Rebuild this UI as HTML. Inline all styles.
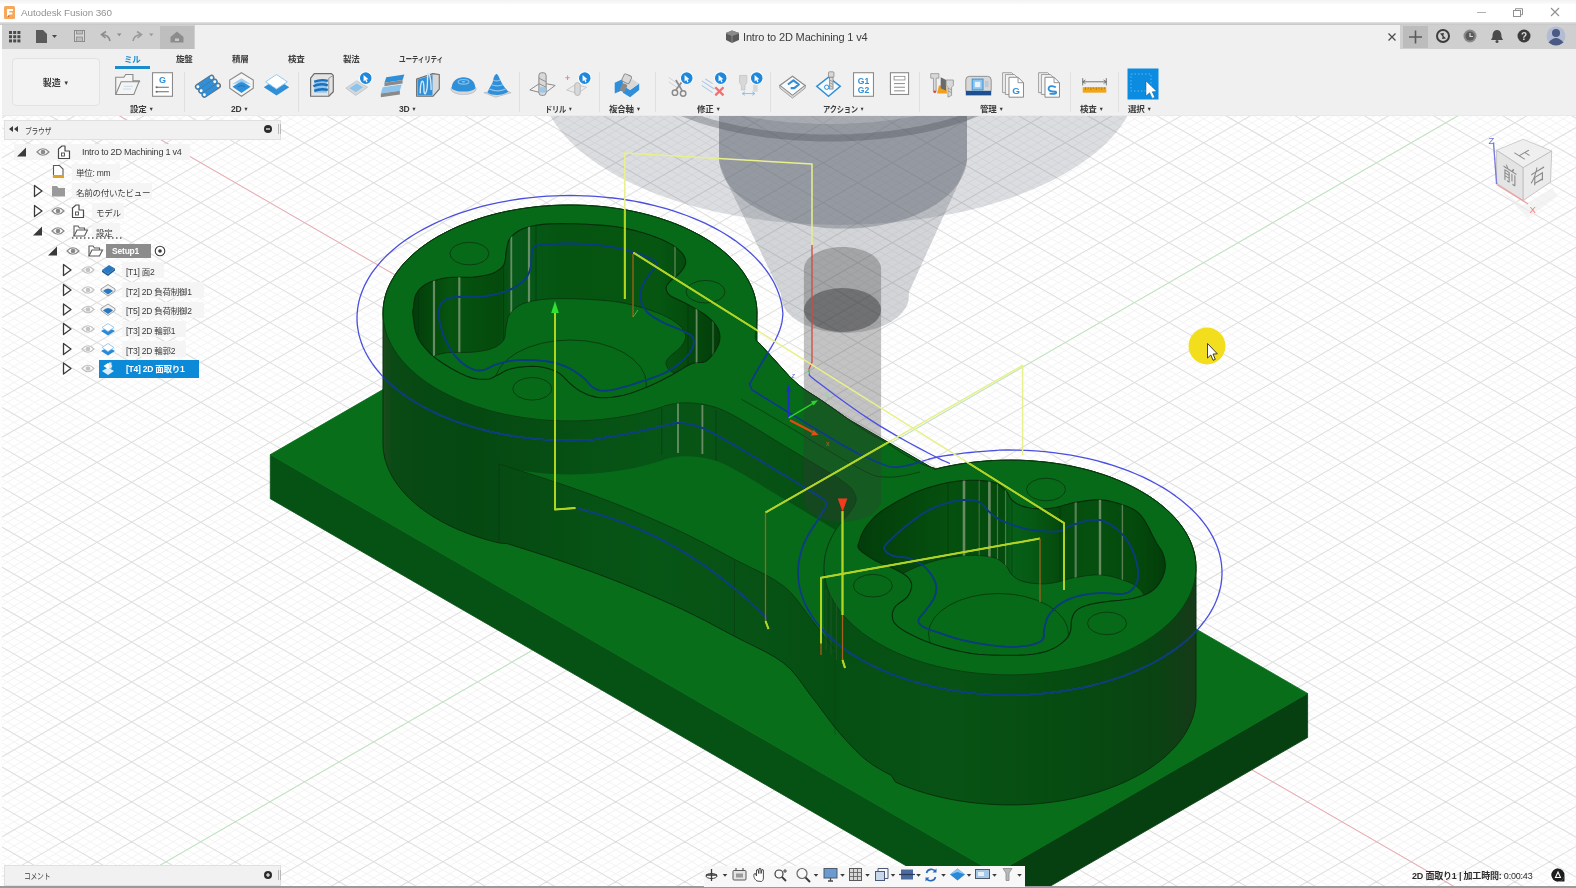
<!DOCTYPE html>
<html lang="ja"><head><meta charset="utf-8"><title>Autodesk Fusion 360</title>
<style>html,body{margin:0;padding:0;background:#fff;overflow:hidden}#app{filter:blur(0.5px);position:relative;width:1576px;height:888px;overflow:hidden;background:#fff}#app div{line-height:1.25}</style></head><body><div id="app">
<svg width="1576" height="888" viewBox="0 0 1576 888" style="position:absolute;left:0;top:0"><defs><linearGradient id="gw1" gradientUnits="userSpaceOnUse" x1="383" y1="0" x2="1196" y2="0">
<stop offset="0" stop-color="#1c4a1e"/><stop offset="0.012" stop-color="#0a4a14"/><stop offset="0.1" stop-color="#054811"/><stop offset="0.2" stop-color="#064e13"/>
<stop offset="0.33" stop-color="#075616"/><stop offset="0.42" stop-color="#075315"/><stop offset="0.55" stop-color="#064f13"/><stop offset="0.7" stop-color="#075214"/><stop offset="0.85" stop-color="#064b11"/>
<stop offset="0.95" stop-color="#0a4312"/><stop offset="1" stop-color="#163a18"/></linearGradient><linearGradient id="gp1" gradientUnits="userSpaceOnUse" x1="413" y1="0" x2="720" y2="0">
<stop offset="0" stop-color="#033d0a"/><stop offset="0.12" stop-color="#06540f"/><stop offset="0.28" stop-color="#044a0c"/><stop offset="0.33" stop-color="#07591a"/>
<stop offset="0.5" stop-color="#055410"/><stop offset="0.8" stop-color="#065612"/><stop offset="0.9" stop-color="#044a0c"/><stop offset="1" stop-color="#033d0a"/></linearGradient><linearGradient id="gp2" gradientUnits="userSpaceOnUse" x1="859" y1="0" x2="1165" y2="0">
<stop offset="0" stop-color="#033d0a"/><stop offset="0.3" stop-color="#05500f"/><stop offset="0.47" stop-color="#044a0c"/><stop offset="0.5" stop-color="#076018"/><stop offset="0.56" stop-color="#065a14"/><stop offset="0.66" stop-color="#044a0c"/>
<stop offset="0.75" stop-color="#05500f"/><stop offset="0.9" stop-color="#044a0c"/><stop offset="1" stop-color="#033d0a"/></linearGradient><clipPath id="cp0"><path d="M413.6,306.9 413.9,304.0 414.3,300.7 414.9,297.3 416.1,294.2 417.9,291.4 420.1,288.7 422.9,286.3 426.3,284.1 430.5,282.1 435.5,280.3 440.9,278.8 446.6,277.7 452.7,277.3 459.3,277.3 465.9,277.4 472.0,277.2 477.6,276.6 483.0,275.8 488.0,274.8 492.3,273.4 496.0,271.8 499.1,269.8 501.7,267.6 503.7,265.0 504.9,261.9 505.5,258.3 505.7,254.6 506.2,251.1 506.9,247.7 507.5,244.5 508.4,241.3 510.1,238.4 512.4,235.6 515.4,233.0 518.8,230.7 522.7,228.7 527.2,227.2 532.1,226.0 537.4,225.1 543.0,224.4 549.0,223.9 555.4,223.7 562.0,223.6 568.4,223.7 574.8,223.7 581.1,224.0 587.5,224.3 593.8,224.7 600.2,225.1 606.5,225.6 612.8,226.3 619.2,227.2 625.6,228.4 632.0,229.9 638.4,231.5 644.6,233.3 650.7,235.3 656.7,237.5 662.4,239.8 667.4,242.2 671.8,244.6 675.5,247.2 678.8,249.8 681.4,252.3 683.4,254.9 684.7,257.4 685.5,259.9 685.7,262.5 685.1,265.1 683.8,267.6 682.1,270.2 680.1,272.6 677.7,275.0 674.9,277.3 672.1,279.5 669.9,281.5 668.4,283.3 667.2,284.8 666.4,286.3 666.1,287.9 666.3,289.7 666.9,291.6 668.0,293.5 669.9,295.5 672.9,297.3 676.7,299.1 680.9,301.0 685.2,303.1 689.6,305.4 694.2,307.9 698.8,310.6 702.9,313.2 706.7,316.0 710.1,318.8 713.2,321.7 715.6,324.7 717.5,327.8 718.9,330.9 719.7,334.2 719.9,337.4 719.6,340.6 718.7,343.8 717.3,347.0 715.6,350.1 713.6,353.2 711.1,356.4 708.4,359.3 705.5,361.5 702.5,362.4 699.5,362.5 696.1,362.5 692.2,363.5 687.7,365.6 682.6,368.6 677.3,371.8 671.9,374.9 666.4,377.8 660.8,380.7 655.0,383.6 649.0,386.3 642.8,388.8 636.3,391.3 629.9,393.5 623.7,395.2 617.6,396.4 611.8,397.3 606.1,397.8 600.8,397.7 595.9,397.1 591.3,395.9 587.0,394.4 583.0,392.6 579.5,390.7 576.4,388.6 573.4,386.2 570.4,383.8 567.4,380.9 564.5,377.9 561.4,374.9 557.7,372.3 553.2,370.3 548.3,368.6 543.0,367.3 537.4,366.5 531.2,366.3 524.4,366.7 517.8,367.4 512.0,368.5 507.1,370.1 502.7,372.3 498.9,374.4 495.5,376.1 493.0,377.4 491.3,378.3 489.4,379.0 486.6,379.2 482.6,379.2 477.8,379.0 472.4,378.1 466.3,376.1 459.1,372.8 450.9,368.3 442.8,363.3 435.8,358.4 430.2,353.5 425.4,348.5 421.3,343.4 418.1,338.1 415.8,332.2 414.4,325.9 413.6,320.0 413.0,315.2 412.7,312.2 412.8,310.4 413.2,309.0Z"/></clipPath><clipPath id="cp1"><path d="M859.4,541.4 860.2,538.7 861.2,535.7 862.6,532.5 864.5,529.2 866.9,525.7 869.8,522.1 873.1,518.4 876.7,515.0 880.7,511.8 885.2,508.7 890.0,505.7 895.0,502.8 900.3,499.8 905.9,496.9 911.6,494.1 917.3,491.6 922.9,489.5 928.6,487.6 934.2,486.0 939.6,484.5 944.9,483.3 949.9,482.3 954.9,481.5 959.9,480.9 965.1,480.5 970.4,480.2 975.5,480.2 980.3,480.5 984.7,480.9 989.0,481.4 993.0,482.3 996.5,483.5 999.6,485.2 1002.3,487.2 1004.6,489.5 1006.6,491.6 1008.1,493.7 1009.1,495.8 1010.1,497.8 1011.7,499.7 1013.9,501.6 1016.5,503.5 1019.5,505.1 1022.9,506.4 1027.1,507.4 1031.8,508.2 1036.7,508.6 1041.2,508.9 1045.1,508.8 1048.8,508.5 1052.2,508.0 1055.4,507.5 1058.2,506.9 1060.7,506.2 1063.1,505.5 1065.5,504.8 1067.7,504.2 1069.7,503.6 1072.1,503.0 1075.7,502.4 1080.8,501.6 1087.1,500.6 1093.8,499.9 1100.1,499.7 1105.9,500.4 1111.6,501.5 1117.1,503.0 1122.4,504.8 1127.3,506.6 1132.0,508.5 1136.4,511.1 1140.7,515.0 1144.9,521.0 1149.1,528.6 1152.9,536.2 1156.1,542.3 1158.5,546.2 1160.3,548.8 1161.7,551.1 1162.9,553.7 1164.0,557.0 1164.8,560.4 1165.2,563.9 1165.2,567.4 1164.7,570.9 1163.6,574.5 1162.3,577.9 1160.6,581.1 1158.8,584.0 1156.6,586.8 1154.2,589.2 1151.5,591.4 1148.4,593.2 1144.9,594.7 1141.3,596.0 1137.8,597.1 1134.5,598.0 1131.2,598.7 1127.8,599.3 1124.1,599.8 1119.9,600.3 1115.2,600.7 1110.5,601.1 1105.8,601.7 1101.1,602.4 1096.3,603.1 1091.6,604.0 1087.6,605.1 1084.1,606.3 1081.0,607.6 1078.3,609.1 1076.1,610.8 1074.4,612.8 1073.2,615.0 1072.3,617.4 1071.6,619.9 1071.1,622.7 1071.1,625.7 1070.9,628.6 1070.4,631.4 1069.5,633.8 1068.4,636.1 1066.8,638.3 1064.7,640.5 1062.0,642.9 1058.6,645.4 1054.9,647.7 1051.0,649.6 1046.9,651.2 1042.4,652.4 1037.7,653.4 1032.7,654.2 1027.6,654.8 1022.2,655.1 1016.4,655.3 1009.9,655.3 1002.4,655.3 994.0,655.1 985.6,654.8 977.9,654.2 971.1,653.4 964.8,652.3 958.7,651.0 952.8,649.6 946.9,648.1 941.1,646.5 935.4,644.7 929.9,642.8 924.5,640.7 919.1,638.4 914.0,636.0 909.4,633.7 905.2,631.4 901.5,629.1 898.2,626.8 895.7,624.5 893.9,622.2 892.9,619.9 892.4,617.7 892.3,615.4 892.4,613.1 893.0,610.8 894.1,608.5 895.7,606.2 898.1,604.0 901.3,601.8 904.5,599.5 907.1,597.1 908.9,594.4 910.4,591.4 911.3,588.4 911.7,585.7 911.4,583.2 910.5,580.9 909.1,578.7 907.1,576.5 904.4,574.5 901.1,572.5 897.4,570.5 893.4,568.6 889.1,566.6 884.4,564.8 879.6,562.8 875.1,560.6 870.6,557.9 866.0,554.8 861.9,551.8 859.1,549.1 858.0,547.0 858.0,545.3 858.6,543.5Z"/></clipPath><clipPath id="cw0"><path d="M413.2,309.0 412.8,310.4 412.7,312.2 413.0,315.2 413.6,320.0 414.4,325.9 415.8,332.2 418.1,338.1 421.3,343.4 425.4,348.5 430.2,353.5 433.2,356.1 435.5,355.3 440.9,353.8 446.6,352.7 452.7,352.3 459.3,352.3 465.9,352.4 472.0,352.2 477.6,351.6 483.0,350.8 488.0,349.8 492.3,348.4 496.0,346.8 499.1,344.8 501.7,342.6 503.7,340.0 504.9,336.9 505.5,333.3 505.7,329.6 506.2,326.1 506.9,322.7 507.5,319.5 508.4,316.3 510.1,313.4 512.4,310.6 515.4,308.0 518.8,305.7 522.7,303.7 527.2,302.2 532.1,301.0 537.4,300.1 543.0,299.4 549.0,298.9 555.4,298.7 562.0,298.6 568.4,298.7 574.8,298.7 581.1,299.0 587.5,299.3 593.8,299.7 600.2,300.1 606.5,300.6 612.8,301.3 619.2,302.2 625.6,303.4 632.0,304.9 638.4,306.5 644.6,308.3 650.7,310.3 656.7,312.5 662.4,314.8 667.4,317.2 671.8,319.6 675.5,322.2 678.8,324.8 681.4,327.3 683.4,329.9 684.7,332.4 685.5,334.9 685.7,337.5 685.1,340.1 683.8,342.6 682.1,345.2 680.1,347.6 677.7,350.0 674.9,352.3 672.1,354.5 669.9,356.5 668.4,358.3 667.2,359.8 666.4,361.3 666.1,362.9 666.3,364.7 666.9,366.6 668.0,368.5 669.9,370.5 672.9,372.3 674.8,373.2 677.3,371.8 682.6,368.6 687.7,365.6 692.2,363.5 696.1,362.5 699.5,362.5 702.5,362.4 705.5,361.5 708.4,359.3 711.1,356.4 713.6,353.2 715.6,350.1 717.3,347.0 718.7,343.8 719.6,340.6 719.9,337.4 719.7,334.2 718.9,330.9 717.5,327.8 715.6,324.7 713.2,321.7 710.1,318.8 706.7,316.0 702.9,313.2 698.8,310.6 694.2,307.9 689.6,305.4 685.2,303.1 680.9,301.0 676.7,299.1 672.9,297.3 669.9,295.5 668.0,293.5 666.9,291.6 666.3,289.7 666.1,287.9 666.4,286.3 667.2,284.8 668.4,283.3 669.9,281.5 672.1,279.5 674.9,277.3 677.7,275.0 680.1,272.6 682.1,270.2 683.8,267.6 685.1,265.1 685.7,262.5 685.5,259.9 684.7,257.4 683.4,254.9 681.4,252.3 678.8,249.8 675.5,247.2 671.8,244.6 667.4,242.2 662.4,239.8 656.7,237.5 650.7,235.3 644.6,233.3 638.4,231.5 632.0,229.9 625.6,228.4 619.2,227.2 612.8,226.3 606.5,225.6 600.2,225.1 593.8,224.7 587.5,224.3 581.1,224.0 574.8,223.7 568.4,223.7 562.0,223.6 555.4,223.7 549.0,223.9 543.0,224.4 537.4,225.1 532.1,226.0 527.2,227.2 522.7,228.7 518.8,230.7 515.4,233.0 512.4,235.6 510.1,238.4 508.4,241.3 507.5,244.5 506.9,247.7 506.2,251.1 505.7,254.6 505.5,258.3 504.9,261.9 503.7,265.0 501.7,267.6 499.1,269.8 496.0,271.8 492.3,273.4 488.0,274.8 483.0,275.8 477.6,276.6 472.0,277.2 465.9,277.4 459.3,277.3 452.7,277.3 446.6,277.7 440.9,278.8 435.5,280.3 430.5,282.1 426.3,284.1 422.9,286.3 420.1,288.7 417.9,291.4 416.1,294.2 414.9,297.3 414.3,300.7 413.9,304.0 413.6,306.9Z"/></clipPath><clipPath id="cw1"><path d="M858.6,543.5 858.0,545.3 858.0,547.0 859.1,549.1 861.9,551.8 866.0,554.8 870.6,557.9 875.1,560.6 879.6,562.8 884.4,564.8 889.1,566.6 893.4,568.6 897.4,570.5 901.1,572.5 902.8,573.5 905.9,571.9 911.6,569.1 917.3,566.6 922.9,564.5 928.6,562.6 934.2,561.0 939.6,559.5 944.9,558.3 949.9,557.3 954.9,556.5 959.9,555.9 965.1,555.5 970.4,555.2 975.5,555.2 980.3,555.5 984.7,555.9 989.0,556.4 993.0,557.3 996.5,558.5 999.6,560.2 1002.3,562.2 1004.6,564.5 1006.6,566.6 1008.1,568.7 1009.1,570.8 1010.1,572.8 1011.7,574.7 1013.9,576.6 1016.5,578.5 1019.5,580.1 1022.9,581.4 1027.1,582.4 1031.8,583.2 1036.7,583.6 1041.2,583.9 1045.1,583.8 1048.8,583.5 1052.2,583.0 1055.4,582.5 1058.2,581.9 1060.7,581.2 1063.1,580.5 1065.5,579.8 1067.7,579.2 1069.7,578.6 1072.1,578.0 1075.7,577.4 1080.8,576.6 1087.1,575.6 1093.8,574.9 1100.1,574.7 1105.9,575.4 1111.6,576.5 1117.1,578.0 1122.4,579.8 1127.3,581.6 1132.0,583.5 1136.4,586.1 1140.7,590.0 1144.2,595.0 1144.9,594.7 1148.4,593.2 1151.5,591.4 1154.2,589.2 1156.6,586.8 1158.8,584.0 1160.6,581.1 1162.3,577.9 1163.6,574.5 1164.7,570.9 1165.2,567.4 1165.2,563.9 1164.8,560.4 1164.0,557.0 1162.9,553.7 1161.7,551.1 1160.3,548.8 1158.5,546.2 1156.1,542.3 1152.9,536.2 1149.1,528.6 1144.9,521.0 1140.7,515.0 1136.4,511.1 1132.0,508.5 1127.3,506.6 1122.4,504.8 1117.1,503.0 1111.6,501.5 1105.9,500.4 1100.1,499.7 1093.8,499.9 1087.1,500.6 1080.8,501.6 1075.7,502.4 1072.1,503.0 1069.7,503.6 1067.7,504.2 1065.5,504.8 1063.1,505.5 1060.7,506.2 1058.2,506.9 1055.4,507.5 1052.2,508.0 1048.8,508.5 1045.1,508.8 1041.2,508.9 1036.7,508.6 1031.8,508.2 1027.1,507.4 1022.9,506.4 1019.5,505.1 1016.5,503.5 1013.9,501.6 1011.7,499.7 1010.1,497.8 1009.1,495.8 1008.1,493.7 1006.6,491.6 1004.6,489.5 1002.3,487.2 999.6,485.2 996.5,483.5 993.0,482.3 989.0,481.4 984.7,480.9 980.3,480.5 975.5,480.2 970.4,480.2 965.1,480.5 959.9,480.9 954.9,481.5 949.9,482.3 944.9,483.3 939.6,484.5 934.2,486.0 928.6,487.6 922.9,489.5 917.3,491.6 911.6,494.1 905.9,496.9 900.3,499.8 895.0,502.8 890.0,505.7 885.2,508.7 880.7,511.8 876.7,515.0 873.1,518.4 869.8,522.1 866.9,525.7 864.5,529.2 862.6,532.5 861.2,535.7 860.2,538.7 859.4,541.4Z"/></clipPath><clipPath id="cgreen"><path d="M1195.0,556.3 1193.9,551.3 1192.3,546.3 1190.4,541.3 1188.1,536.5 1185.3,531.6 1182.2,526.9 1178.7,522.3 1174.8,517.7 1170.6,513.3 1166.0,509.0 1161.0,504.8 1155.8,500.8 1150.2,496.9 1144.2,493.2 1138.0,489.6 1131.5,486.2 1124.8,483.0 1117.7,480.0 1110.5,477.1 1103.0,474.5 1095.3,472.1 1087.4,469.8 1079.4,467.9 1071.2,466.1 1062.8,464.5 1054.4,463.2 1045.8,462.1 1037.2,461.3 1028.5,460.6 1019.7,460.2 1011.0,460.1 1002.2,460.2 993.5,460.5 984.8,461.1 976.1,461.9 967.5,462.9 959.0,464.2 950.7,465.7 942.4,467.4 935.0,469.2 935.0,468.5 932.8,467.8 931.4,467.4 847.6,418.7 844.2,416.3 833.1,408.4 823.9,402.0 817.3,397.6 812.2,394.4 808.0,391.7 804.0,389.0 800.3,386.2 797.1,383.5 794.2,380.9 791.4,378.3 788.7,375.6 786.2,372.8 783.7,370.0 781.2,367.2 778.6,364.4 776.1,361.6 773.5,358.8 771.0,356.0 768.4,353.1 765.6,350.1 763.1,347.2 760.9,344.8 759.1,343.1 757.5,341.8 757.0,341.3 757.0,313.0 756.8,308.3 756.3,303.6 755.4,298.9 754.2,294.2 752.6,289.6 750.6,285.0 748.3,280.5 745.7,276.1 742.8,271.7 739.5,267.4 735.9,263.1 731.9,259.0 727.7,255.0 723.2,251.1 718.4,247.3 713.3,243.6 707.9,240.0 702.2,236.6 696.3,233.4 690.2,230.3 683.8,227.3 677.3,224.5 670.5,221.9 663.5,219.5 656.3,217.2 649.0,215.1 641.6,213.2 634.0,211.5 626.2,210.0 618.4,208.7 610.5,207.6 602.5,206.6 594.4,205.9 586.3,205.4 578.2,205.1 570.0,205.0 561.8,205.1 553.7,205.4 545.6,205.9 537.5,206.6 529.5,207.6 521.6,208.7 513.8,210.0 506.0,211.5 498.4,213.2 491.0,215.1 483.7,217.2 476.5,219.5 469.5,221.9 462.7,224.5 456.2,227.3 449.8,230.3 443.7,233.4 437.8,236.6 432.1,240.0 426.7,243.6 421.6,247.3 416.8,251.1 412.3,255.0 408.1,259.0 404.1,263.1 400.5,267.4 397.2,271.7 394.3,276.1 391.7,280.5 389.4,285.0 387.4,289.6 385.8,294.2 384.6,298.9 383.7,303.6 383.2,308.3 383.0,313.0 383.0,366.0 383.0,366.1 383.0,389.5 270.3,454.6 270.3,498.7 995.8,917.6 1307.6,737.5 1307.6,693.4 1196.0,629.0 1196.0,620.4 1196.0,619.9 1196.0,619.4 1196.0,566.4 1195.7,561.3Z"/></clipPath></defs>
<path d="M0,-807.9L1576,102.3M0,-799.9L1576,110.3M0,-783.9L1576,126.2M0,-775.9L1576,134.2M0,-767.9L1576,142.2M0,-759.9L1576,150.2M0,-744.0L1576,166.2M0,-736.0L1576,174.2M0,-728.0L1576,182.1M0,-720.0L1576,190.1M0,-704.0L1576,206.1M0,-696.0L1576,214.1M0,-688.1L1576,222.1M0,-680.1L1576,230.1M0,-664.1L1576,246.0M0,-656.1L1576,254.0M0,-648.1L1576,262.0M0,-640.1L1576,270.0M0,-624.2L1576,286.0M0,-616.2L1576,294.0M0,-608.2L1576,302.0M0,-600.2L1576,310.0M0,-584.2L1576,325.9M0,-576.2L1576,333.9M0,-568.2L1576,341.9M0,-560.2L1576,349.9M0,-544.3L1576,365.9M0,-536.3L1576,373.9M0,-528.3L1576,381.8M0,-520.3L1576,389.8M0,-504.3L1576,405.8M0,-496.3L1576,413.8M0,-488.4L1576,421.8M0,-480.4L1576,429.8M0,-464.4L1576,445.7M0,-456.4L1576,453.7M0,-448.4L1576,461.7M0,-440.4L1576,469.7M0,-424.5L1576,485.7M0,-416.5L1576,493.7M0,-408.5L1576,501.7M0,-400.5L1576,509.7M0,-384.5L1576,525.6M0,-376.5L1576,533.6M0,-368.5L1576,541.6M0,-360.5L1576,549.6M0,-344.6L1576,565.6M0,-336.6L1576,573.6M0,-328.6L1576,581.5M0,-320.6L1576,589.5M0,-304.6L1576,605.5M0,-296.6L1576,613.5M0,-288.7L1576,621.5M0,-280.7L1576,629.5M0,-264.7L1576,645.4M0,-256.7L1576,653.4M0,-248.7L1576,661.4M0,-240.7L1576,669.4M0,-224.8L1576,685.4M0,-216.8L1576,693.4M0,-208.8L1576,701.4M0,-200.8L1576,709.4M0,-184.8L1576,725.3M0,-176.8L1576,733.3M0,-168.8L1576,741.3M0,-160.8L1576,749.3M0,-144.9L1576,765.3M0,-136.9L1576,773.3M0,-128.9L1576,781.2M0,-120.9L1576,789.2M0,-104.9L1576,805.2M0,-96.9L1576,813.2M0,-89.0L1576,821.2M0,-81.0L1576,829.2M0,-65.0L1576,845.1M0,-57.0L1576,853.1M0,-49.0L1576,861.1M0,-41.0L1576,869.1M0,-25.1L1576,885.1M0,-17.1L1576,893.1M0,-9.1L1576,901.1M0,-1.1L1576,909.1M0,14.9L1576,925.0M0,22.9L1576,933.0M0,30.9L1576,941.0M0,38.9L1576,949.0M0,54.8L1576,965.0M0,62.8L1576,973.0M0,70.8L1576,980.9M0,103.0L1576,-807.1M0,78.8L1576,988.9M0,111.0L1576,-799.1M0,94.8L1576,1004.9M0,127.0L1576,-783.2M0,102.8L1576,1012.9M0,135.0L1576,-775.2M0,110.7L1576,1020.9M0,142.9L1576,-767.2M0,118.7L1576,1028.9M0,150.9L1576,-759.2M0,134.7L1576,1044.8M0,166.9L1576,-743.2M0,142.7L1576,1052.8M0,174.9L1576,-735.2M0,150.7L1576,1060.8M0,182.9L1576,-727.3M0,158.7L1576,1068.8M0,190.9L1576,-719.3M0,174.6L1576,1084.8M0,206.8L1576,-703.3M0,182.6L1576,1092.8M0,214.8L1576,-695.3M0,190.6L1576,1100.8M0,222.8L1576,-687.3M0,198.6L1576,1108.8M0,230.8L1576,-679.3M0,214.6L1576,1124.7M0,246.8L1576,-663.4M0,222.6L1576,1132.7M0,254.8L1576,-655.4M0,230.6L1576,1140.7M0,262.8L1576,-647.4M0,238.6L1576,1148.7M0,270.8L1576,-639.4M0,254.5L1576,1164.7M0,286.7L1576,-623.4M0,262.5L1576,1172.7M0,294.7L1576,-615.4M0,270.5L1576,1180.6M0,302.7L1576,-607.4M0,278.5L1576,1188.6M0,310.7L1576,-599.4M0,294.5L1576,1204.6M0,326.7L1576,-583.5M0,302.5L1576,1212.6M0,334.7L1576,-575.5M0,310.4L1576,1220.6M0,342.6L1576,-567.5M0,318.4L1576,1228.6M0,350.6L1576,-559.5M0,334.4L1576,1244.5M0,366.6L1576,-543.5M0,342.4L1576,1252.5M0,374.6L1576,-535.5M0,350.4L1576,1260.5M0,382.6L1576,-527.6M0,358.4L1576,1268.5M0,390.6L1576,-519.6M0,374.3L1576,1284.5M0,406.5L1576,-503.6M0,382.3L1576,1292.5M0,414.5L1576,-495.6M0,390.3L1576,1300.5M0,422.5L1576,-487.6M0,398.3L1576,1308.5M0,430.5L1576,-479.6M0,414.3L1576,1324.4M0,446.5L1576,-463.7M0,422.3L1576,1332.4M0,454.5L1576,-455.7M0,430.3L1576,1340.4M0,462.5L1576,-447.7M0,438.3L1576,1348.4M0,470.5L1576,-439.7M0,454.2L1576,1364.4M0,486.4L1576,-423.7M0,462.2L1576,1372.4M0,494.4L1576,-415.7M0,470.2L1576,1380.3M0,502.4L1576,-407.7M0,478.2L1576,1388.3M0,510.4L1576,-399.7M0,494.2L1576,1404.3M0,526.4L1576,-383.8M0,502.2L1576,1412.3M0,534.4L1576,-375.8M0,510.1L1576,1420.3M0,542.3L1576,-367.8M0,518.1L1576,1428.3M0,550.3L1576,-359.8M0,534.1L1576,1444.2M0,566.3L1576,-343.8M0,542.1L1576,1452.2M0,574.3L1576,-335.8M0,550.1L1576,1460.2M0,582.3L1576,-327.9M0,558.1L1576,1468.2M0,590.3L1576,-319.9M0,574.0L1576,1484.2M0,606.2L1576,-303.9M0,582.0L1576,1492.2M0,614.2L1576,-295.9M0,590.0L1576,1500.2M0,622.2L1576,-287.9M0,598.0L1576,1508.2M0,630.2L1576,-279.9M0,614.0L1576,1524.1M0,646.2L1576,-264.0M0,622.0L1576,1532.1M0,654.2L1576,-256.0M0,630.0L1576,1540.1M0,662.2L1576,-248.0M0,638.0L1576,1548.1M0,670.2L1576,-240.0M0,653.9L1576,1564.1M0,686.1L1576,-224.0M0,661.9L1576,1572.1M0,694.1L1576,-216.0M0,669.9L1576,1580.0M0,702.1L1576,-208.0M0,677.9L1576,1588.0M0,710.1L1576,-200.0M0,693.9L1576,1604.0M0,726.1L1576,-184.1M0,701.9L1576,1612.0M0,734.1L1576,-176.1M0,709.8L1576,1620.0M0,742.0L1576,-168.1M0,717.8L1576,1628.0M0,750.0L1576,-160.1M0,733.8L1576,1643.9M0,766.0L1576,-144.1M0,741.8L1576,1651.9M0,774.0L1576,-136.1M0,749.8L1576,1659.9M0,782.0L1576,-128.2M0,757.8L1576,1667.9M0,790.0L1576,-120.2M0,773.7L1576,1683.9M0,805.9L1576,-104.2M0,781.7L1576,1691.9M0,813.9L1576,-96.2M0,789.7L1576,1699.9M0,821.9L1576,-88.2M0,797.7L1576,1707.9M0,829.9L1576,-80.2M0,813.7L1576,1723.8M0,845.9L1576,-64.3M0,821.7L1576,1731.8M0,853.9L1576,-56.3M0,829.7L1576,1739.8M0,861.9L1576,-48.3M0,837.7L1576,1747.8M0,869.9L1576,-40.3M0,853.6L1576,1763.8M0,885.8L1576,-24.3M0,861.6L1576,1771.8M0,893.8L1576,-16.3M0,869.6L1576,1779.7M0,901.8L1576,-8.3M0,877.6L1576,1787.7M0,909.8L1576,-0.3M0,893.6L1576,1803.7M0,925.8L1576,15.6M0,933.8L1576,23.6M0,941.7L1576,31.6M0,949.7L1576,39.6M0,965.7L1576,55.6M0,973.7L1576,63.6M0,981.7L1576,71.5M0,989.7L1576,79.5M0,1005.6L1576,95.5M0,1013.6L1576,103.5M0,1021.6L1576,111.5M0,1029.6L1576,119.5M0,1045.6L1576,135.4M0,1053.6L1576,143.4M0,1061.6L1576,151.4M0,1069.6L1576,159.4M0,1085.5L1576,175.4M0,1093.5L1576,183.4M0,1101.5L1576,191.4M0,1109.5L1576,199.4M0,1125.5L1576,215.3M0,1133.5L1576,223.3M0,1141.4L1576,231.3M0,1149.4L1576,239.3M0,1165.4L1576,255.3M0,1173.4L1576,263.3M0,1181.4L1576,271.2M0,1189.4L1576,279.2M0,1205.3L1576,295.2M0,1213.3L1576,303.2M0,1221.3L1576,311.2M0,1229.3L1576,319.2M0,1245.3L1576,335.1M0,1253.3L1576,343.1M0,1261.3L1576,351.1M0,1269.3L1576,359.1M0,1285.2L1576,375.1M0,1293.2L1576,383.1M0,1301.2L1576,391.1M0,1309.2L1576,399.1M0,1325.2L1576,415.0M0,1333.2L1576,423.0M0,1341.1L1576,431.0M0,1349.1L1576,439.0M0,1365.1L1576,455.0M0,1373.1L1576,463.0M0,1381.1L1576,470.9M0,1389.1L1576,478.9M0,1405.0L1576,494.9M0,1413.0L1576,502.9M0,1421.0L1576,510.9M0,1429.0L1576,518.9M0,1445.0L1576,534.8M0,1453.0L1576,542.8M0,1461.0L1576,550.8M0,1469.0L1576,558.8M0,1484.9L1576,574.8M0,1492.9L1576,582.8M0,1500.9L1576,590.8M0,1508.9L1576,598.8M0,1524.9L1576,614.7M0,1532.9L1576,622.7M0,1540.8L1576,630.7M0,1548.8L1576,638.7M0,1564.8L1576,654.7M0,1572.8L1576,662.7M0,1580.8L1576,670.6M0,1588.8L1576,678.6M0,1604.7L1576,694.6M0,1612.7L1576,702.6M0,1620.7L1576,710.6M0,1628.7L1576,718.6M0,1644.7L1576,734.5M0,1652.7L1576,742.5M0,1660.7L1576,750.5M0,1668.7L1576,758.5M0,1684.6L1576,774.5M0,1692.6L1576,782.5M0,1700.6L1576,790.5M0,1708.6L1576,798.5M0,1724.6L1576,814.4M0,1732.6L1576,822.4M0,1740.5L1576,830.4M0,1748.5L1576,838.4M0,1764.5L1576,854.4M0,1772.5L1576,862.4M0,1780.5L1576,870.3M0,1788.5L1576,878.3M0,1804.4L1576,894.3" stroke="#f2f2f2" stroke-width="0.9" fill="none"/>
<path d="M0,-791.9L1576,118.2M0,-752.0L1576,158.2M0,-712.0L1576,198.1M0,-672.1L1576,238.1M0,-632.1L1576,278.0M0,-592.2L1576,317.9M0,-552.3L1576,357.9M0,-512.3L1576,397.8M0,-472.4L1576,437.8M0,-432.4L1576,477.7M0,-392.5L1576,517.6M0,-352.6L1576,557.6M0,-312.6L1576,597.5M0,-272.7L1576,637.5M0,-232.7L1576,677.4M0,-192.8L1576,717.3M0,-152.9L1576,757.3M0,-112.9L1576,797.2M0,-73.0L1576,837.2M0,-33.0L1576,877.1M0,6.9L1576,917.0M0,46.8L1576,957.0M0,86.8L1576,996.9M0,119.0L1576,-791.2M0,126.7L1576,1036.9M0,158.9L1576,-751.2M0,166.7L1576,1076.8M0,198.9L1576,-711.3M0,206.6L1576,1116.7M0,238.8L1576,-671.3M0,246.5L1576,1156.7M0,278.7L1576,-631.4M0,286.5L1576,1196.6M0,318.7L1576,-591.5M0,326.4L1576,1236.6M0,358.6L1576,-551.5M0,366.4L1576,1276.5M0,398.6L1576,-511.6M0,406.3L1576,1316.4M0,438.5L1576,-471.6M0,446.2L1576,1356.4M0,478.4L1576,-431.7M0,486.2L1576,1396.3M0,518.4L1576,-391.8M0,526.1L1576,1436.3M0,558.3L1576,-351.8M0,566.1L1576,1476.2M0,598.3L1576,-311.9M0,606.0L1576,1516.1M0,638.2L1576,-271.9M0,645.9L1576,1556.1M0,678.1L1576,-232.0M0,685.9L1576,1596.0M0,718.1L1576,-192.1M0,725.8L1576,1636.0M0,758.0L1576,-152.1M0,765.8L1576,1675.9M0,798.0L1576,-112.2M0,805.7L1576,1715.8M0,837.9L1576,-72.2M0,845.6L1576,1755.8M0,877.8L1576,-32.3M0,885.6L1576,1795.7M0,917.8L1576,7.6M0,957.7L1576,47.6M0,997.7L1576,87.5M0,1037.6L1576,127.5M0,1077.5L1576,167.4M0,1117.5L1576,207.3M0,1157.4L1576,247.3M0,1197.4L1576,287.2M0,1237.3L1576,327.2M0,1277.2L1576,367.1M0,1317.2L1576,407.0M0,1357.1L1576,447.0M0,1397.1L1576,486.9M0,1437.0L1576,526.9M0,1476.9L1576,566.8M0,1516.9L1576,606.7M0,1556.8L1576,646.7M0,1596.8L1576,686.6M0,1636.7L1576,726.6M0,1676.6L1576,766.5M0,1716.6L1576,806.4M0,1756.5L1576,846.4M0,1796.5L1576,886.3" stroke="#e0e0e0" stroke-width="1.1" fill="none"/>
<path d="M0,46.8L1576,956.9" stroke="#eeaab2" stroke-width="1" fill="none"/>
<path d="M0,957.7L1576,47.6" stroke="#bde8bd" stroke-width="1" fill="none"/>
<path d="M270.3,454.6 995.8,873.5 995.8,917.6 270.3,498.7Z" fill="#065114" stroke="#065114" stroke-width="0.8"/>
<path d="M995.8,873.5 1307.6,693.4 1307.6,737.5 995.8,917.6Z" fill="#063f10" stroke="#063f10" stroke-width="0.8"/>
<path d="M270.3,454.6 582.1,274.6 1307.6,693.4 995.8,873.5Z" fill="#086e19" stroke="#086e19" stroke-width="0.8"/>
<path d="M456.2,227.3 449.8,230.3 443.7,233.4 437.8,236.6 432.1,240.0 426.7,243.6 421.6,247.3 416.8,251.1 412.3,255.0 408.1,259.0 404.1,263.1 400.5,267.4 397.2,271.7 394.3,276.1 391.7,280.5 389.4,285.0 387.4,289.6 385.8,294.2 384.6,298.9 383.7,303.6 383.2,308.3 383.0,313.0 383.0,366.0 383.0,366.1 383.0,442.2 383.2,448.0 383.9,453.9 385.2,459.7 387.1,465.4 389.4,471.1 392.3,476.7 395.7,482.2 399.6,487.5 404.1,492.8 408.9,497.9 414.3,502.8 420.1,507.6 426.4,512.2 433.1,516.6 440.2,520.7 447.6,524.7 455.4,528.4 463.6,531.8 472.0,535.0 480.8,537.9 489.8,540.6 499.0,542.9 507.5,543.7 519.6,547.5 533.8,552.0 548.3,556.7 561.8,561.2 574.1,565.5 586.3,569.8 598.4,574.2 610.5,578.8 622.7,583.6 635.1,588.6 647.6,593.9 660.0,599.3 672.2,604.7 683.7,610.0 694.5,615.3 704.8,620.5 714.7,625.8 724.5,631.0 734.4,636.3 744.7,641.5 755.2,646.6 765.5,651.8 775.1,657.2 783.5,663.0 790.4,669.2 796.2,675.7 801.3,682.5 806.2,689.4 811.4,696.4 817.0,703.6 822.6,711.1 828.2,718.6 833.7,725.9 839.3,732.7 844.8,739.0 850.4,745.0 855.9,750.7 861.4,756.0 867.0,760.7 873.0,765.0 879.5,769.0 885.8,772.5 891.2,775.3 895.5,782.1 902.6,785.2 909.9,788.0 917.5,790.7 925.3,793.1 933.2,795.3 941.4,797.3 949.7,799.1 958.1,800.6 966.7,801.9 975.3,803.0 984.0,803.8 992.8,804.4 1001.6,804.8 1010.5,804.9 1019.3,804.8 1028.2,804.4 1036.9,803.8 1045.6,802.9 1054.3,801.8 1062.8,800.5 1071.2,798.9 1079.5,797.1 1087.6,795.1 1095.6,792.9 1103.4,790.4 1110.9,787.7 1118.2,784.9 1125.3,781.8 1132.1,778.5 1138.6,775.1 1144.9,771.5 1150.8,767.7 1156.4,763.7 1161.7,759.6 1166.7,755.4 1171.2,751.0 1175.5,746.6 1179.3,742.0 1182.8,737.3 1185.9,732.5 1188.5,727.6 1190.8,722.7 1192.7,717.7 1194.1,712.6 1195.2,707.6 1195.8,702.5 1196.0,697.4 1196.0,620.4 1196.0,619.9 1196.0,619.4 1196.0,566.4 1195.7,561.3 1195.0,556.3 1193.9,551.3 1192.3,546.3 1190.4,541.3 1188.1,536.5 1185.3,531.6 1182.2,526.9 1178.7,522.3 1174.8,517.7 1170.6,513.3 1166.0,509.0 1161.0,504.8 1155.8,500.8 1150.2,496.9 1144.2,493.2 1138.0,489.6 1131.5,486.2 1124.8,483.0 1117.7,480.0 1110.5,477.1 1103.0,474.5 1095.3,472.1 1087.4,469.8 1079.4,467.9 1071.2,466.1 1062.8,464.5 1054.4,463.2 1045.8,462.1 1037.2,461.3 1028.5,460.6 1019.7,460.2 1011.0,460.1 1002.2,460.2 993.5,460.5 984.8,461.1 976.1,461.9 967.5,462.9 959.0,464.2 950.7,465.7 942.4,467.4 935.0,469.2 935.0,468.5 932.8,467.8 931.4,467.4 847.6,418.7 844.2,416.3 833.1,408.4 823.9,402.0 817.3,397.6 812.2,394.4 808.0,391.7 804.0,389.0 800.3,386.2 797.1,383.5 794.2,380.9 791.4,378.3 788.7,375.6 786.2,372.8 783.7,370.0 781.2,367.2 778.6,364.4 776.1,361.6 773.5,358.8 771.0,356.0 768.4,353.1 765.6,350.1 763.1,347.2 760.9,344.8 759.1,343.1 757.5,341.8 757.0,341.3 757.0,313.0 756.8,308.3 756.3,303.6 755.4,298.9 754.2,294.2 752.6,289.6 750.6,285.0 748.3,280.5 745.7,276.1 742.8,271.7 739.5,267.4 735.9,263.1 731.9,259.0 727.7,255.0 723.2,251.1 718.4,247.3 713.3,243.6 707.9,240.0 702.2,236.6 696.3,233.4 690.2,230.3 683.8,227.3 677.3,224.5 670.5,221.9 663.5,219.5 656.3,217.2 649.0,215.1 641.6,213.2 634.0,211.5 626.2,210.0 618.4,208.7 610.5,207.6 602.5,206.6 594.4,205.9 586.3,205.4 578.2,205.1 570.0,205.0 561.8,205.1 553.7,205.4 545.6,205.9 537.5,206.6 529.5,207.6 521.6,208.7 513.8,210.0 506.0,211.5 498.4,213.2 491.0,215.1 483.7,217.2 476.5,219.5 469.5,221.9 462.7,224.5Z" fill="url(#gw1)"/>
<path d="M519.6,470.5 533.8,475.0 548.3,479.7 561.8,484.2 574.1,488.5 586.3,492.8 598.4,497.2 610.5,501.8 622.7,506.6 635.1,511.6 647.6,516.9 660.0,522.3 672.2,527.7 683.7,533.0 694.5,538.3 704.8,543.5 714.7,548.8 724.5,554.0 734.4,559.3 744.7,564.5 755.2,569.6 765.5,574.8 775.1,580.2 783.5,586.0 790.4,592.2 796.2,598.7 801.3,605.5 806.2,612.4 811.4,619.4 817.0,626.6 822.6,634.1 826.5,639.4 825.3,635.2 825.3,635.2 824.3,630.1 824.3,630.1 823.8,625.0 823.8,625.0 823.6,620.0 823.6,619.9 823.6,566.9 823.6,566.9 823.9,561.9 823.9,561.8 824.5,556.8 824.5,556.7 825.6,551.7 825.6,551.7 827.1,546.7 827.1,546.7 829.0,541.7 829.0,541.7 831.3,536.8 831.3,536.8 834.0,532.0 834.0,532.0 835.4,529.9 835.1,529.7 825.7,524.1 812.6,516.3 798.2,507.6 784.4,499.3 784.4,499.3 771.1,491.2 771.1,491.2 757.4,482.8 744.5,475.0 733.6,468.9 725.5,464.7 719.4,462.1 714.0,460.3 708.3,458.8 701.8,457.5 695.3,456.7 688.9,456.3 683.0,456.2 677.4,456.7 672.0,457.6 667.4,458.7 667.3,458.7 664.2,459.4 663.8,459.8 663.8,459.8 663.7,459.9 663.7,459.9 663.7,459.9 663.6,459.9 656.5,462.2 656.5,462.2 649.1,464.3 649.1,464.3 641.7,466.2 641.6,466.2 634.0,467.9 634.0,467.9 626.3,469.4 626.3,469.4 618.5,470.7 618.5,470.7 610.5,471.8 610.5,471.8 602.5,472.8 602.5,472.8 594.4,473.5 594.4,473.5 586.3,474.0 586.3,474.0 578.2,474.3 578.2,474.3 570.0,474.4 570.0,474.4 561.8,474.3 561.8,474.3 553.7,474.0 553.7,474.0 545.6,473.5 545.6,473.5 537.5,472.8 537.5,472.8 529.5,471.8 529.5,471.8 521.5,470.7 521.5,470.7 518.8,470.2ZM851.6,421.0 855.5,423.8 864.6,430.0 870.8,433.8 875.2,436.2 879.1,438.2 879.1,438.2 883.5,440.7 883.5,440.7 888.8,444.0 888.9,444.0 894.5,447.6 900.1,451.2 905.2,454.4 909.9,457.1 914.2,459.6 918.3,461.8 922.2,463.6 926.0,465.2 929.7,466.5 929.9,466.5Z" fill="#076a18"/>
<path d="M663.5,406.5 656.3,408.8 649.0,410.9 641.6,412.8 634.0,414.5 626.2,416.0 618.4,417.3 610.5,418.4 602.5,419.4 594.4,420.1 586.3,420.6 578.2,420.9 570.0,421.0 561.8,420.9 553.7,420.6 545.6,420.1 537.5,419.4 529.5,418.4 521.6,417.3 513.8,416.0 506.0,414.5 498.4,412.8 491.0,410.9 483.7,408.8 476.5,406.5 469.5,404.1 462.7,401.5 456.2,398.7 449.8,395.7 443.7,392.6 437.8,389.4 432.1,386.0 426.7,382.4 421.6,378.7 416.8,374.9 412.3,371.0 408.1,367.0 404.1,362.9 400.5,358.6 397.2,354.3 394.3,349.9 391.7,345.5 389.4,341.0 387.4,336.4 385.8,331.8 384.6,327.1 383.7,322.4 383.2,317.7 383.0,313.0 383.2,308.3 383.7,303.6 384.6,298.9 385.8,294.2 387.4,289.6 389.4,285.0 391.7,280.5 394.3,276.1 397.2,271.7 400.5,267.4 404.1,263.1 408.1,259.0 412.3,255.0 416.8,251.1 421.6,247.3 426.7,243.6 432.1,240.0 437.8,236.6 443.7,233.4 449.8,230.3 456.2,227.3 462.7,224.5 469.5,221.9 476.5,219.5 483.7,217.2 491.0,215.1 498.4,213.2 506.0,211.5 513.8,210.0 521.6,208.7 529.5,207.6 537.5,206.6 545.6,205.9 553.7,205.4 561.8,205.1 570.0,205.0 578.2,205.1 586.3,205.4 594.4,205.9 602.5,206.6 610.5,207.6 618.4,208.7 626.2,210.0 634.0,211.5 641.6,213.2 649.0,215.1 656.3,217.2 663.5,219.5 670.5,221.9 677.3,224.5 683.8,227.3 690.2,230.3 696.3,233.4 702.2,236.6 707.9,240.0 713.3,243.6 718.4,247.3 723.2,251.1 727.7,255.0 731.9,259.0 735.9,263.1 739.5,267.4 742.8,271.7 745.7,276.1 748.3,280.5 750.6,285.0 752.6,289.6 754.2,294.2 755.4,298.9 756.3,303.6 756.8,308.3 757.0,313.0 756.9,315.3 756.8,318.7 756.7,322.5 756.5,326.0 756.1,329.4 755.6,332.8 755.3,336.0 755.5,338.7 756.3,340.6 757.5,341.8 759.1,343.1 760.9,344.8 763.1,347.2 765.6,350.1 768.4,353.1 771.0,356.0 773.5,358.8 776.1,361.6 778.6,364.4 781.2,367.2 783.7,370.0 786.2,372.8 788.7,375.6 791.4,378.3 794.2,380.9 797.1,383.5 800.3,386.2 804.0,389.0 808.0,391.7 812.2,394.4 817.3,397.6 823.9,402.0 833.1,408.4 844.2,416.3 855.3,424.1 864.4,430.3 870.6,434.1 875.0,436.6 878.9,438.5 883.3,441.0 888.6,444.3 894.3,447.9 899.8,451.5 905.0,454.7 909.7,457.4 914.0,459.9 918.1,462.1 922.0,464.0 925.8,465.6 929.6,466.8 932.8,467.8 935.0,468.5 934.3,469.4 942.4,467.4 950.7,465.7 959.0,464.2 967.5,462.9 976.1,461.9 984.8,461.1 993.5,460.5 1002.2,460.2 1011.0,460.1 1019.7,460.2 1028.5,460.6 1037.2,461.3 1045.8,462.1 1054.4,463.2 1062.8,464.5 1071.2,466.1 1079.4,467.9 1087.4,469.8 1095.3,472.1 1103.0,474.5 1110.5,477.1 1117.7,480.0 1124.8,483.0 1131.5,486.2 1138.0,489.6 1144.2,493.2 1150.2,496.9 1155.8,500.8 1161.0,504.8 1166.0,509.0 1170.6,513.3 1174.8,517.7 1178.7,522.3 1182.2,526.9 1185.3,531.6 1188.1,536.5 1190.4,541.3 1192.3,546.3 1193.9,551.3 1195.0,556.3 1195.7,561.3 1196.0,566.4 1195.9,571.4 1195.3,576.5 1194.4,581.5 1193.1,586.5 1191.3,591.5 1189.1,596.4 1186.6,601.2 1183.6,606.0 1180.3,610.7 1176.6,615.3 1172.5,619.7 1168.1,624.1 1163.3,628.3 1158.2,632.4 1152.7,636.4 1146.9,640.2 1140.8,643.8 1134.5,647.3 1127.8,650.6 1120.9,653.7 1113.7,656.6 1106.4,659.4 1098.8,661.9 1091.0,664.2 1083.0,666.3 1074.8,668.2 1066.6,669.8 1058.1,671.2 1049.6,672.4 1041.0,673.4 1032.3,674.1 1023.6,674.6 1014.9,674.9 1006.1,674.9 997.3,674.7 988.6,674.2 979.9,673.5 971.3,672.6 962.8,671.4 954.4,670.0 946.1,668.4 937.9,666.5 929.9,664.4 922.1,662.2 914.5,659.7 907.1,657.0 899.9,654.1 892.9,651.0 886.3,647.7 879.9,644.2 873.7,640.6 867.9,636.8 862.4,632.9 857.3,628.8 852.4,624.6 848.0,620.2 843.8,615.8 840.1,611.2 836.7,606.5 833.7,601.8 831.1,596.9 828.9,592.0 827.1,587.1 825.7,582.1 824.7,577.0 824.2,572.0 824.0,566.9 824.3,561.9 824.9,556.8 826.0,551.8 827.5,546.8 829.4,541.9 831.7,537.0 834.3,532.2 837.4,527.4 840.9,522.8 844.7,518.2 848.9,513.8 850.0,511.8 851.4,510.0 852.8,508.0 854.0,506.0 854.9,504.1 855.6,502.2 856.1,500.2 856.0,498.0 855.4,495.6 854.3,493.0 852.8,490.4 851.0,488.0 848.5,485.6 845.5,483.3 842.4,481.2 840.0,479.5 839.5,479.0 840.1,479.3 839.6,479.0 835.3,476.4 825.9,470.7 812.8,462.9 798.4,454.2 784.6,446.0 771.3,437.9 757.6,429.5 744.7,421.7 733.8,415.5 725.7,411.4 719.5,408.7 714.2,406.9 708.4,405.4 701.9,404.1 695.3,403.3 688.9,402.9 683.0,402.8 677.4,403.3 671.9,404.2 667.3,405.3 664.0,406.0Z" fill="#076a18" stroke="#076a18" stroke-width="0.5"/>
<path d="M413.6,306.9 413.9,304.0 414.3,300.7 414.9,297.3 416.1,294.2 417.9,291.4 420.1,288.7 422.9,286.3 426.3,284.1 430.5,282.1 435.5,280.3 440.9,278.8 446.6,277.7 452.7,277.3 459.3,277.3 465.9,277.4 472.0,277.2 477.6,276.6 483.0,275.8 488.0,274.8 492.3,273.4 496.0,271.8 499.1,269.8 501.7,267.6 503.7,265.0 504.9,261.9 505.5,258.3 505.7,254.6 506.2,251.1 506.9,247.7 507.5,244.5 508.4,241.3 510.1,238.4 512.4,235.6 515.4,233.0 518.8,230.7 522.7,228.7 527.2,227.2 532.1,226.0 537.4,225.1 543.0,224.4 549.0,223.9 555.4,223.7 562.0,223.6 568.4,223.7 574.8,223.7 581.1,224.0 587.5,224.3 593.8,224.7 600.2,225.1 606.5,225.6 612.8,226.3 619.2,227.2 625.6,228.4 632.0,229.9 638.4,231.5 644.6,233.3 650.7,235.3 656.7,237.5 662.4,239.8 667.4,242.2 671.8,244.6 675.5,247.2 678.8,249.8 681.4,252.3 683.4,254.9 684.7,257.4 685.5,259.9 685.7,262.5 685.1,265.1 683.8,267.6 682.1,270.2 680.1,272.6 677.7,275.0 674.9,277.3 672.1,279.5 669.9,281.5 668.4,283.3 667.2,284.8 666.4,286.3 666.1,287.9 666.3,289.7 666.9,291.6 668.0,293.5 669.9,295.5 672.9,297.3 676.7,299.1 680.9,301.0 685.2,303.1 689.6,305.4 694.2,307.9 698.8,310.6 702.9,313.2 706.7,316.0 710.1,318.8 713.2,321.7 715.6,324.7 717.5,327.8 718.9,330.9 719.7,334.2 719.9,337.4 719.6,340.6 718.7,343.8 717.3,347.0 715.6,350.1 713.6,353.2 711.1,356.4 708.4,359.3 705.5,361.5 702.5,362.4 699.5,362.5 696.1,362.5 692.2,363.5 687.7,365.6 682.6,368.6 677.3,371.8 671.9,374.9 666.4,377.8 660.8,380.7 655.0,383.6 649.0,386.3 642.8,388.8 636.3,391.3 629.9,393.5 623.7,395.2 617.6,396.4 611.8,397.3 606.1,397.8 600.8,397.7 595.9,397.1 591.3,395.9 587.0,394.4 583.0,392.6 579.5,390.7 576.4,388.6 573.4,386.2 570.4,383.8 567.4,380.9 564.5,377.9 561.4,374.9 557.7,372.3 553.2,370.3 548.3,368.6 543.0,367.3 537.4,366.5 531.2,366.3 524.4,366.7 517.8,367.4 512.0,368.5 507.1,370.1 502.7,372.3 498.9,374.4 495.5,376.1 493.0,377.4 491.3,378.3 489.4,379.0 486.6,379.2 482.6,379.2 477.8,379.0 472.4,378.1 466.3,376.1 459.1,372.8 450.9,368.3 442.8,363.3 435.8,358.4 430.2,353.5 425.4,348.5 421.3,343.4 418.1,338.1 415.8,332.2 414.4,325.9 413.6,320.0 413.0,315.2 412.7,312.2 412.8,310.4 413.2,309.0Z" fill="url(#gp1)"/>
<g clip-path="url(#cp0)"><path d="M413.6,381.9 413.9,379.0 414.3,375.7 414.9,372.3 416.1,369.2 417.9,366.4 420.1,363.7 422.9,361.3 426.3,359.1 430.5,357.1 435.5,355.3 440.9,353.8 446.6,352.7 452.7,352.3 459.3,352.3 465.9,352.4 472.0,352.2 477.6,351.6 483.0,350.8 488.0,349.8 492.3,348.4 496.0,346.8 499.1,344.8 501.7,342.6 503.7,340.0 504.9,336.9 505.5,333.3 505.7,329.6 506.2,326.1 506.9,322.7 507.5,319.5 508.4,316.3 510.1,313.4 512.4,310.6 515.4,308.0 518.8,305.7 522.7,303.7 527.2,302.2 532.1,301.0 537.4,300.1 543.0,299.4 549.0,298.9 555.4,298.7 562.0,298.6 568.4,298.7 574.8,298.7 581.1,299.0 587.5,299.3 593.8,299.7 600.2,300.1 606.5,300.6 612.8,301.3 619.2,302.2 625.6,303.4 632.0,304.9 638.4,306.5 644.6,308.3 650.7,310.3 656.7,312.5 662.4,314.8 667.4,317.2 671.8,319.6 675.5,322.2 678.8,324.8 681.4,327.3 683.4,329.9 684.7,332.4 685.5,334.9 685.7,337.5 685.1,340.1 683.8,342.6 682.1,345.2 680.1,347.6 677.7,350.0 674.9,352.3 672.1,354.5 669.9,356.5 668.4,358.3 667.2,359.8 666.4,361.3 666.1,362.9 666.3,364.7 666.9,366.6 668.0,368.5 669.9,370.5 672.9,372.3 676.7,374.1 680.9,376.0 685.2,378.1 689.6,380.4 694.2,382.9 698.8,385.6 702.9,388.2 706.7,391.0 710.1,393.8 713.2,396.7 715.6,399.7 717.5,402.8 718.9,405.9 719.7,409.2 719.9,412.4 719.6,415.6 718.7,418.8 717.3,422.0 715.6,425.1 713.6,428.2 711.1,431.4 708.4,434.3 705.5,436.5 702.5,437.4 699.5,437.5 696.1,437.5 692.2,438.5 687.7,440.6 682.6,443.6 677.3,446.8 671.9,449.9 666.4,452.8 660.8,455.7 655.0,458.6 649.0,461.3 642.8,463.8 636.3,466.3 629.9,468.5 623.7,470.2 617.6,471.4 611.8,472.3 606.1,472.8 600.8,472.7 595.9,472.1 591.3,470.9 587.0,469.4 583.0,467.6 579.5,465.7 576.4,463.6 573.4,461.2 570.4,458.8 567.4,455.9 564.5,452.9 561.4,449.9 557.7,447.3 553.2,445.3 548.3,443.6 543.0,442.3 537.4,441.5 531.2,441.3 524.4,441.7 517.8,442.4 512.0,443.5 507.1,445.1 502.7,447.3 498.9,449.4 495.5,451.1 493.0,452.4 491.3,453.3 489.4,454.0 486.6,454.2 482.6,454.2 477.8,454.0 472.4,453.1 466.3,451.1 459.1,447.8 450.9,443.3 442.8,438.3 435.8,433.4 430.2,428.5 425.4,423.5 421.3,418.4 418.1,413.1 415.8,407.2 414.4,400.9 413.6,395.0 413.0,390.2 412.7,387.2 412.8,385.4 413.2,384.0Z" fill="#076a18"/></g>
<path d="M859.4,541.4 860.2,538.7 861.2,535.7 862.6,532.5 864.5,529.2 866.9,525.7 869.8,522.1 873.1,518.4 876.7,515.0 880.7,511.8 885.2,508.7 890.0,505.7 895.0,502.8 900.3,499.8 905.9,496.9 911.6,494.1 917.3,491.6 922.9,489.5 928.6,487.6 934.2,486.0 939.6,484.5 944.9,483.3 949.9,482.3 954.9,481.5 959.9,480.9 965.1,480.5 970.4,480.2 975.5,480.2 980.3,480.5 984.7,480.9 989.0,481.4 993.0,482.3 996.5,483.5 999.6,485.2 1002.3,487.2 1004.6,489.5 1006.6,491.6 1008.1,493.7 1009.1,495.8 1010.1,497.8 1011.7,499.7 1013.9,501.6 1016.5,503.5 1019.5,505.1 1022.9,506.4 1027.1,507.4 1031.8,508.2 1036.7,508.6 1041.2,508.9 1045.1,508.8 1048.8,508.5 1052.2,508.0 1055.4,507.5 1058.2,506.9 1060.7,506.2 1063.1,505.5 1065.5,504.8 1067.7,504.2 1069.7,503.6 1072.1,503.0 1075.7,502.4 1080.8,501.6 1087.1,500.6 1093.8,499.9 1100.1,499.7 1105.9,500.4 1111.6,501.5 1117.1,503.0 1122.4,504.8 1127.3,506.6 1132.0,508.5 1136.4,511.1 1140.7,515.0 1144.9,521.0 1149.1,528.6 1152.9,536.2 1156.1,542.3 1158.5,546.2 1160.3,548.8 1161.7,551.1 1162.9,553.7 1164.0,557.0 1164.8,560.4 1165.2,563.9 1165.2,567.4 1164.7,570.9 1163.6,574.5 1162.3,577.9 1160.6,581.1 1158.8,584.0 1156.6,586.8 1154.2,589.2 1151.5,591.4 1148.4,593.2 1144.9,594.7 1141.3,596.0 1137.8,597.1 1134.5,598.0 1131.2,598.7 1127.8,599.3 1124.1,599.8 1119.9,600.3 1115.2,600.7 1110.5,601.1 1105.8,601.7 1101.1,602.4 1096.3,603.1 1091.6,604.0 1087.6,605.1 1084.1,606.3 1081.0,607.6 1078.3,609.1 1076.1,610.8 1074.4,612.8 1073.2,615.0 1072.3,617.4 1071.6,619.9 1071.1,622.7 1071.1,625.7 1070.9,628.6 1070.4,631.4 1069.5,633.8 1068.4,636.1 1066.8,638.3 1064.7,640.5 1062.0,642.9 1058.6,645.4 1054.9,647.7 1051.0,649.6 1046.9,651.2 1042.4,652.4 1037.7,653.4 1032.7,654.2 1027.6,654.8 1022.2,655.1 1016.4,655.3 1009.9,655.3 1002.4,655.3 994.0,655.1 985.6,654.8 977.9,654.2 971.1,653.4 964.8,652.3 958.7,651.0 952.8,649.6 946.9,648.1 941.1,646.5 935.4,644.7 929.9,642.8 924.5,640.7 919.1,638.4 914.0,636.0 909.4,633.7 905.2,631.4 901.5,629.1 898.2,626.8 895.7,624.5 893.9,622.2 892.9,619.9 892.4,617.7 892.3,615.4 892.4,613.1 893.0,610.8 894.1,608.5 895.7,606.2 898.1,604.0 901.3,601.8 904.5,599.5 907.1,597.1 908.9,594.4 910.4,591.4 911.3,588.4 911.7,585.7 911.4,583.2 910.5,580.9 909.1,578.7 907.1,576.5 904.4,574.5 901.1,572.5 897.4,570.5 893.4,568.6 889.1,566.6 884.4,564.8 879.6,562.8 875.1,560.6 870.6,557.9 866.0,554.8 861.9,551.8 859.1,549.1 858.0,547.0 858.0,545.3 858.6,543.5Z" fill="url(#gp2)"/>
<g clip-path="url(#cp1)"><path d="M859.4,616.4 860.2,613.7 861.2,610.7 862.6,607.5 864.5,604.2 866.9,600.7 869.8,597.1 873.1,593.4 876.7,590.0 880.7,586.8 885.2,583.7 890.0,580.7 895.0,577.8 900.3,574.8 905.9,571.9 911.6,569.1 917.3,566.6 922.9,564.5 928.6,562.6 934.2,561.0 939.6,559.5 944.9,558.3 949.9,557.3 954.9,556.5 959.9,555.9 965.1,555.5 970.4,555.2 975.5,555.2 980.3,555.5 984.7,555.9 989.0,556.4 993.0,557.3 996.5,558.5 999.6,560.2 1002.3,562.2 1004.6,564.5 1006.6,566.6 1008.1,568.7 1009.1,570.8 1010.1,572.8 1011.7,574.7 1013.9,576.6 1016.5,578.5 1019.5,580.1 1022.9,581.4 1027.1,582.4 1031.8,583.2 1036.7,583.6 1041.2,583.9 1045.1,583.8 1048.8,583.5 1052.2,583.0 1055.4,582.5 1058.2,581.9 1060.7,581.2 1063.1,580.5 1065.5,579.8 1067.7,579.2 1069.7,578.6 1072.1,578.0 1075.7,577.4 1080.8,576.6 1087.1,575.6 1093.8,574.9 1100.1,574.7 1105.9,575.4 1111.6,576.5 1117.1,578.0 1122.4,579.8 1127.3,581.6 1132.0,583.5 1136.4,586.1 1140.7,590.0 1144.9,596.0 1149.1,603.6 1152.9,611.2 1156.1,617.3 1158.5,621.2 1160.3,623.8 1161.7,626.1 1162.9,628.7 1164.0,632.0 1164.8,635.4 1165.2,638.9 1165.2,642.4 1164.7,645.9 1163.6,649.5 1162.3,652.9 1160.6,656.1 1158.8,659.0 1156.6,661.8 1154.2,664.2 1151.5,666.4 1148.4,668.2 1144.9,669.7 1141.3,671.0 1137.8,672.1 1134.5,673.0 1131.2,673.7 1127.8,674.3 1124.1,674.8 1119.9,675.3 1115.2,675.7 1110.5,676.1 1105.8,676.7 1101.1,677.4 1096.3,678.1 1091.6,679.0 1087.6,680.1 1084.1,681.3 1081.0,682.6 1078.3,684.1 1076.1,685.8 1074.4,687.8 1073.2,690.0 1072.3,692.4 1071.6,694.9 1071.1,697.7 1071.1,700.7 1070.9,703.6 1070.4,706.4 1069.5,708.8 1068.4,711.1 1066.8,713.3 1064.7,715.5 1062.0,717.9 1058.6,720.4 1054.9,722.7 1051.0,724.6 1046.9,726.2 1042.4,727.4 1037.7,728.4 1032.7,729.2 1027.6,729.8 1022.2,730.1 1016.4,730.3 1009.9,730.3 1002.4,730.3 994.0,730.1 985.6,729.8 977.9,729.2 971.1,728.4 964.8,727.3 958.7,726.0 952.8,724.6 946.9,723.1 941.1,721.5 935.4,719.7 929.9,717.8 924.5,715.7 919.1,713.4 914.0,711.0 909.4,708.7 905.2,706.4 901.5,704.1 898.2,701.8 895.7,699.5 893.9,697.2 892.9,694.9 892.4,692.7 892.3,690.4 892.4,688.1 893.0,685.8 894.1,683.5 895.7,681.2 898.1,679.0 901.3,676.8 904.5,674.5 907.1,672.1 908.9,669.4 910.4,666.4 911.3,663.4 911.7,660.7 911.4,658.2 910.5,655.9 909.1,653.7 907.1,651.5 904.4,649.5 901.1,647.5 897.4,645.5 893.4,643.6 889.1,641.6 884.4,639.8 879.6,637.8 875.1,635.6 870.6,632.9 866.0,629.8 861.9,626.8 859.1,624.1 858.0,622.0 858.0,620.3 858.6,618.5Z" fill="#076a18"/></g>
<path d="M1195.7,561.3 1195.0,556.3 1193.9,551.3 1192.3,546.3 1190.4,541.3 1188.1,536.5 1185.3,531.6 1182.2,526.9 1178.7,522.3 1174.8,517.7 1170.6,513.3 1166.0,509.0 1161.0,504.8 1155.8,500.8 1150.2,496.9 1144.2,493.2 1138.0,489.6 1131.5,486.2 1124.8,483.0 1117.7,480.0 1110.5,477.1 1103.0,474.5 1095.3,472.1 1087.4,469.8 1079.4,467.9 1071.2,466.1 1062.8,464.5 1054.4,463.2 1045.8,462.1 1037.2,461.3 1028.5,460.6 1019.7,460.2 1011.0,460.1 1002.2,460.2 993.5,460.5 984.8,461.1 976.1,461.9 967.5,462.9 959.0,464.2 950.7,465.7 942.4,467.4 935.0,469.2 935.0,468.5 932.8,467.8 931.4,467.4 847.6,418.7 844.2,416.3 833.1,408.4 823.9,402.0 817.3,397.6 812.2,394.4 808.0,391.7 804.0,389.0 800.3,386.2 797.1,383.5 794.2,380.9 791.4,378.3 788.7,375.6 786.2,372.8 783.7,370.0 781.2,367.2 778.6,364.4 776.1,361.6 773.5,358.8 771.0,356.0 768.4,353.1 765.6,350.1 763.1,347.2 760.9,344.8 759.1,343.1 757.5,341.8 757.0,341.3 757.0,313.0 756.8,308.3 756.3,303.6 755.4,298.9 754.2,294.2 752.6,289.6 750.6,285.0 748.3,280.5 745.7,276.1 742.8,271.7 739.5,267.4 735.9,263.1 731.9,259.0 727.7,255.0 723.2,251.1 718.4,247.3 713.3,243.6 707.9,240.0 702.2,236.6 696.3,233.4 690.2,230.3 683.8,227.3 677.3,224.5 670.5,221.9 663.5,219.5 656.3,217.2 649.0,215.1 641.6,213.2 634.0,211.5 626.2,210.0 618.4,208.7 610.5,207.6 602.5,206.6 594.4,205.9 586.3,205.4 578.2,205.1 570.0,205.0 561.8,205.1 553.7,205.4 545.6,205.9 537.5,206.6 529.5,207.6 521.6,208.7 513.8,210.0 506.0,211.5 498.4,213.2 491.0,215.1 483.7,217.2 476.5,219.5 469.5,221.9 462.7,224.5 456.2,227.3 449.8,230.3 443.7,233.4 437.8,236.6 432.1,240.0 426.7,243.6 421.6,247.3 416.8,251.1 412.3,255.0 408.1,259.0 404.1,263.1 400.5,267.4 397.2,271.7 394.3,276.1 391.7,280.5 389.4,285.0 387.4,289.6 385.8,294.2 384.6,298.9 383.7,303.6 383.2,308.3 383.0,313.0 383.0,366.0 383.0,366.1 383.0,442.2 383.2,448.0 383.9,453.9 385.2,459.7 387.1,465.4 389.4,471.1 392.3,476.7 395.7,482.2 399.6,487.5 404.1,492.8 408.9,497.9 414.3,502.8 420.1,507.6 426.4,512.2 433.1,516.6 440.2,520.7 447.6,524.7 455.4,528.4 463.6,531.8 472.0,535.0 480.8,537.9 489.8,540.6 499.0,542.9 507.5,543.7 519.6,547.5 533.8,552.0 548.3,556.7 561.8,561.2 574.1,565.5 586.3,569.8 598.4,574.2 610.5,578.8 622.7,583.6 635.1,588.6 647.6,593.9 660.0,599.3 672.2,604.7 683.7,610.0 694.5,615.3 704.8,620.5 714.7,625.8 724.5,631.0 734.4,636.3 744.7,641.5 755.2,646.6 765.5,651.8 775.1,657.2 783.5,663.0 790.4,669.2 796.2,675.7 801.3,682.5 806.2,689.4 811.4,696.4 817.0,703.6 822.6,711.1 828.2,718.6 833.7,725.9 839.3,732.7 844.8,739.0 850.4,745.0 855.9,750.7 861.4,756.0 867.0,760.7 873.0,765.0 879.5,769.0 885.8,772.5 891.2,775.3 895.5,782.1 902.6,785.2 909.9,788.0 917.5,790.7 925.3,793.1 933.2,795.3 941.4,797.3 949.7,799.1 958.1,800.6 966.7,801.9 975.3,803.0 984.0,803.8 992.8,804.4 1001.6,804.8 1010.5,804.9 1019.3,804.8 1028.2,804.4 1036.9,803.8 1045.6,802.9 1054.3,801.8 1062.8,800.5 1071.2,798.9 1079.5,797.1 1087.6,795.1 1095.6,792.9 1103.4,790.4 1110.9,787.7 1118.2,784.9 1125.3,781.8 1132.1,778.5 1138.6,775.1 1144.9,771.5 1150.8,767.7 1156.4,763.7 1161.7,759.6 1166.7,755.4 1171.2,751.0 1175.5,746.6 1179.3,742.0 1182.8,737.3 1185.9,732.5 1188.5,727.6 1190.8,722.7 1192.7,717.7 1194.1,712.6 1195.2,707.6 1195.8,702.5 1196.0,697.4 1196.0,620.4 1196.0,619.9 1196.0,619.4 1196.0,566.4Z" fill="none" stroke="#06300c" stroke-width="1.0" />
<path d="M663.5,406.5 656.3,408.8 649.0,410.9 641.6,412.8 634.0,414.5 626.2,416.0 618.4,417.3 610.5,418.4 602.5,419.4 594.4,420.1 586.3,420.6 578.2,420.9 570.0,421.0 561.8,420.9 553.7,420.6 545.6,420.1 537.5,419.4 529.5,418.4 521.6,417.3 513.8,416.0 506.0,414.5 498.4,412.8 491.0,410.9 483.7,408.8 476.5,406.5 469.5,404.1 462.7,401.5 456.2,398.7 449.8,395.7 443.7,392.6 437.8,389.4 432.1,386.0 426.7,382.4 421.6,378.7 416.8,374.9 412.3,371.0 408.1,367.0 404.1,362.9 400.5,358.6 397.2,354.3 394.3,349.9 391.7,345.5 389.4,341.0 387.4,336.4 385.8,331.8 384.6,327.1 383.7,322.4 383.2,317.7 383.0,313.0 383.2,308.3 383.7,303.6 384.6,298.9 385.8,294.2 387.4,289.6 389.4,285.0 391.7,280.5 394.3,276.1 397.2,271.7 400.5,267.4 404.1,263.1 408.1,259.0 412.3,255.0 416.8,251.1 421.6,247.3 426.7,243.6 432.1,240.0 437.8,236.6 443.7,233.4 449.8,230.3 456.2,227.3 462.7,224.5 469.5,221.9 476.5,219.5 483.7,217.2 491.0,215.1 498.4,213.2 506.0,211.5 513.8,210.0 521.6,208.7 529.5,207.6 537.5,206.6 545.6,205.9 553.7,205.4 561.8,205.1 570.0,205.0 578.2,205.1 586.3,205.4 594.4,205.9 602.5,206.6 610.5,207.6 618.4,208.7 626.2,210.0 634.0,211.5 641.6,213.2 649.0,215.1 656.3,217.2 663.5,219.5 670.5,221.9 677.3,224.5 683.8,227.3 690.2,230.3 696.3,233.4 702.2,236.6 707.9,240.0 713.3,243.6 718.4,247.3 723.2,251.1 727.7,255.0 731.9,259.0 735.9,263.1 739.5,267.4 742.8,271.7 745.7,276.1 748.3,280.5 750.6,285.0 752.6,289.6 754.2,294.2 755.4,298.9 756.3,303.6 756.8,308.3 757.0,313.0 756.9,315.3 756.8,318.7 756.7,322.5 756.5,326.0 756.1,329.4 755.6,332.8 755.3,336.0 755.5,338.7 756.3,340.6 757.5,341.8 759.1,343.1 760.9,344.8 763.1,347.2 765.6,350.1 768.4,353.1 771.0,356.0 773.5,358.8 776.1,361.6 778.6,364.4 781.2,367.2 783.7,370.0 786.2,372.8 788.7,375.6 791.4,378.3 794.2,380.9 797.1,383.5 800.3,386.2 804.0,389.0 808.0,391.7 812.2,394.4 817.3,397.6 823.9,402.0 833.1,408.4 844.2,416.3 855.3,424.1 864.4,430.3 870.6,434.1 875.0,436.6 878.9,438.5 883.3,441.0 888.6,444.3 894.3,447.9 899.8,451.5 905.0,454.7 909.7,457.4 914.0,459.9 918.1,462.1 922.0,464.0 925.8,465.6 929.6,466.8 932.8,467.8 935.0,468.5 934.3,469.4 942.4,467.4 950.7,465.7 959.0,464.2 967.5,462.9 976.1,461.9 984.8,461.1 993.5,460.5 1002.2,460.2 1011.0,460.1 1019.7,460.2 1028.5,460.6 1037.2,461.3 1045.8,462.1 1054.4,463.2 1062.8,464.5 1071.2,466.1 1079.4,467.9 1087.4,469.8 1095.3,472.1 1103.0,474.5 1110.5,477.1 1117.7,480.0 1124.8,483.0 1131.5,486.2 1138.0,489.6 1144.2,493.2 1150.2,496.9 1155.8,500.8 1161.0,504.8 1166.0,509.0 1170.6,513.3 1174.8,517.7 1178.7,522.3 1182.2,526.9 1185.3,531.6 1188.1,536.5 1190.4,541.3 1192.3,546.3 1193.9,551.3 1195.0,556.3 1195.7,561.3 1196.0,566.4 1195.9,571.4 1195.3,576.5 1194.4,581.5 1193.1,586.5 1191.3,591.5 1189.1,596.4 1186.6,601.2 1183.6,606.0 1180.3,610.7 1176.6,615.3 1172.5,619.7 1168.1,624.1 1163.3,628.3 1158.2,632.4 1152.7,636.4 1146.9,640.2 1140.8,643.8 1134.5,647.3 1127.8,650.6 1120.9,653.7 1113.7,656.6 1106.4,659.4 1098.8,661.9 1091.0,664.2 1083.0,666.3 1074.8,668.2 1066.6,669.8 1058.1,671.2 1049.6,672.4 1041.0,673.4 1032.3,674.1 1023.6,674.6 1014.9,674.9 1006.1,674.9 997.3,674.7 988.6,674.2 979.9,673.5 971.3,672.6 962.8,671.4 954.4,670.0 946.1,668.4 937.9,666.5 929.9,664.4 922.1,662.2 914.5,659.7 907.1,657.0 899.9,654.1 892.9,651.0 886.3,647.7 879.9,644.2 873.7,640.6 867.9,636.8 862.4,632.9 857.3,628.8 852.4,624.6 848.0,620.2 843.8,615.8 840.1,611.2 836.7,606.5 833.7,601.8 831.1,596.9 828.9,592.0 827.1,587.1 825.7,582.1 824.7,577.0 824.2,572.0 824.0,566.9 824.3,561.9 824.9,556.8 826.0,551.8 827.5,546.8 829.4,541.9 831.7,537.0 834.3,532.2 837.4,527.4 840.9,522.8 844.7,518.2 848.9,513.8 850.0,511.8 851.4,510.0 852.8,508.0 854.0,506.0 854.9,504.1 855.6,502.2 856.1,500.2 856.0,498.0 855.4,495.6 854.3,493.0 852.8,490.4 851.0,488.0 848.5,485.6 845.5,483.3 842.4,481.2 840.0,479.5 839.5,479.0 840.1,479.3 839.6,479.0 835.3,476.4 825.9,470.7 812.8,462.9 798.4,454.2 784.6,446.0 771.3,437.9 757.6,429.5 744.7,421.7 733.8,415.5 725.7,411.4 719.5,408.7 714.2,406.9 708.4,405.4 701.9,404.1 695.3,403.3 688.9,402.9 683.0,402.8 677.4,403.3 671.9,404.2 667.3,405.3 664.0,406.0Z" fill="none" stroke="#0a3a10" stroke-width="0.9" />
<path d="M833.7,648.9 828.2,641.6 822.6,634.1 817.0,626.6 811.4,619.4 806.2,612.4 801.3,605.5 796.2,598.7 790.4,592.2 783.5,586.0 775.1,580.2 765.5,574.8 755.2,569.6 744.7,564.5 734.4,559.3 724.5,554.0 714.7,548.8 704.8,543.5 694.5,538.3 683.7,533.0 672.2,527.7 660.0,522.3 647.6,516.9 635.1,511.6 622.7,506.6 610.5,501.8 598.4,497.2 586.3,492.8 574.1,488.5 561.8,484.2 548.3,479.7 533.8,475.0 519.6,470.5 507.5,466.7 498.9,464.0" fill="none" stroke="#0a3a10" stroke-width="0.9" />
<path d="M498.9,464L498.9,541" fill="none" stroke="#0a3a10" stroke-width="0.8" />
<path d="M734.5,560L734.5,636" fill="none" stroke="#0a3a10" stroke-width="0.6" />
<path d="M835,652L835,735" fill="none" stroke="#0a3a10" stroke-width="0.6" opacity="0.6"/>
<path d="M741.5,399.3 746.6,402.2 753.9,406.3 762.1,411.0 770.0,415.6 777.8,420.2 786.0,425.1 793.7,429.7 800.0,433.5 803.3,435.6 804.5,436.4 806.5,437.7 812.0,441.0 823.4,447.7 838.6,456.7 854.0,465.5 866.0,472.0 873.3,475.2 877.8,476.5 881.2,476.8 885.0,477.0 889.4,477.2 893.6,477.1 897.7,476.6 902.0,476.0 906.9,475.1 912.1,473.9 916.7,472.8 920.0,472.0" fill="none" stroke="#0a3a10" stroke-width="0.8" />
<g clip-path="url(#cp0)"><path d="M413.6,381.9 413.9,379.0 414.3,375.7 414.9,372.3 416.1,369.2 417.9,366.4 420.1,363.7 422.9,361.3 426.3,359.1 430.5,357.1 435.5,355.3 440.9,353.8 446.6,352.7 452.7,352.3 459.3,352.3 465.9,352.4 472.0,352.2 477.6,351.6 483.0,350.8 488.0,349.8 492.3,348.4 496.0,346.8 499.1,344.8 501.7,342.6 503.7,340.0 504.9,336.9 505.5,333.3 505.7,329.6 506.2,326.1 506.9,322.7 507.5,319.5 508.4,316.3 510.1,313.4 512.4,310.6 515.4,308.0 518.8,305.7 522.7,303.7 527.2,302.2 532.1,301.0 537.4,300.1 543.0,299.4 549.0,298.9 555.4,298.7 562.0,298.6 568.4,298.7 574.8,298.7 581.1,299.0 587.5,299.3 593.8,299.7 600.2,300.1 606.5,300.6 612.8,301.3 619.2,302.2 625.6,303.4 632.0,304.9 638.4,306.5 644.6,308.3 650.7,310.3 656.7,312.5 662.4,314.8 667.4,317.2 671.8,319.6 675.5,322.2 678.8,324.8 681.4,327.3 683.4,329.9 684.7,332.4 685.5,334.9 685.7,337.5 685.1,340.1 683.8,342.6 682.1,345.2 680.1,347.6 677.7,350.0 674.9,352.3 672.1,354.5 669.9,356.5 668.4,358.3 667.2,359.8 666.4,361.3 666.1,362.9 666.3,364.7 666.9,366.6 668.0,368.5 669.9,370.5 672.9,372.3 676.7,374.1 680.9,376.0 685.2,378.1 689.6,380.4 694.2,382.9 698.8,385.6 702.9,388.2 706.7,391.0 710.1,393.8 713.2,396.7 715.6,399.7 717.5,402.8 718.9,405.9 719.7,409.2 719.9,412.4 719.6,415.6 718.7,418.8 717.3,422.0 715.6,425.1 713.6,428.2 711.1,431.4 708.4,434.3 705.5,436.5 702.5,437.4 699.5,437.5 696.1,437.5 692.2,438.5 687.7,440.6 682.6,443.6 677.3,446.8 671.9,449.9 666.4,452.8 660.8,455.7 655.0,458.6 649.0,461.3 642.8,463.8 636.3,466.3 629.9,468.5 623.7,470.2 617.6,471.4 611.8,472.3 606.1,472.8 600.8,472.7 595.9,472.1 591.3,470.9 587.0,469.4 583.0,467.6 579.5,465.7 576.4,463.6 573.4,461.2 570.4,458.8 567.4,455.9 564.5,452.9 561.4,449.9 557.7,447.3 553.2,445.3 548.3,443.6 543.0,442.3 537.4,441.5 531.2,441.3 524.4,441.7 517.8,442.4 512.0,443.5 507.1,445.1 502.7,447.3 498.9,449.4 495.5,451.1 493.0,452.4 491.3,453.3 489.4,454.0 486.6,454.2 482.6,454.2 477.8,454.0 472.4,453.1 466.3,451.1 459.1,447.8 450.9,443.3 442.8,438.3 435.8,433.4 430.2,428.5 425.4,423.5 421.3,418.4 418.1,413.1 415.8,407.2 414.4,400.9 413.6,395.0 413.0,390.2 412.7,387.2 412.8,385.4 413.2,384.0Z" fill="none" stroke="#0a3a10" stroke-width="1"/></g>
<path d="M413.6,306.9 413.9,304.0 414.3,300.7 414.9,297.3 416.1,294.2 417.9,291.4 420.1,288.7 422.9,286.3 426.3,284.1 430.5,282.1 435.5,280.3 440.9,278.8 446.6,277.7 452.7,277.3 459.3,277.3 465.9,277.4 472.0,277.2 477.6,276.6 483.0,275.8 488.0,274.8 492.3,273.4 496.0,271.8 499.1,269.8 501.7,267.6 503.7,265.0 504.9,261.9 505.5,258.3 505.7,254.6 506.2,251.1 506.9,247.7 507.5,244.5 508.4,241.3 510.1,238.4 512.4,235.6 515.4,233.0 518.8,230.7 522.7,228.7 527.2,227.2 532.1,226.0 537.4,225.1 543.0,224.4 549.0,223.9 555.4,223.7 562.0,223.6 568.4,223.7 574.8,223.7 581.1,224.0 587.5,224.3 593.8,224.7 600.2,225.1 606.5,225.6 612.8,226.3 619.2,227.2 625.6,228.4 632.0,229.9 638.4,231.5 644.6,233.3 650.7,235.3 656.7,237.5 662.4,239.8 667.4,242.2 671.8,244.6 675.5,247.2 678.8,249.8 681.4,252.3 683.4,254.9 684.7,257.4 685.5,259.9 685.7,262.5 685.1,265.1 683.8,267.6 682.1,270.2 680.1,272.6 677.7,275.0 674.9,277.3 672.1,279.5 669.9,281.5 668.4,283.3 667.2,284.8 666.4,286.3 666.1,287.9 666.3,289.7 666.9,291.6 668.0,293.5 669.9,295.5 672.9,297.3 676.7,299.1 680.9,301.0 685.2,303.1 689.6,305.4 694.2,307.9 698.8,310.6 702.9,313.2 706.7,316.0 710.1,318.8 713.2,321.7 715.6,324.7 717.5,327.8 718.9,330.9 719.7,334.2 719.9,337.4 719.6,340.6 718.7,343.8 717.3,347.0 715.6,350.1 713.6,353.2 711.1,356.4 708.4,359.3 705.5,361.5 702.5,362.4 699.5,362.5 696.1,362.5 692.2,363.5 687.7,365.6 682.6,368.6 677.3,371.8 671.9,374.9 666.4,377.8 660.8,380.7 655.0,383.6 649.0,386.3 642.8,388.8 636.3,391.3 629.9,393.5 623.7,395.2 617.6,396.4 611.8,397.3 606.1,397.8 600.8,397.7 595.9,397.1 591.3,395.9 587.0,394.4 583.0,392.6 579.5,390.7 576.4,388.6 573.4,386.2 570.4,383.8 567.4,380.9 564.5,377.9 561.4,374.9 557.7,372.3 553.2,370.3 548.3,368.6 543.0,367.3 537.4,366.5 531.2,366.3 524.4,366.7 517.8,367.4 512.0,368.5 507.1,370.1 502.7,372.3 498.9,374.4 495.5,376.1 493.0,377.4 491.3,378.3 489.4,379.0 486.6,379.2 482.6,379.2 477.8,379.0 472.4,378.1 466.3,376.1 459.1,372.8 450.9,368.3 442.8,363.3 435.8,358.4 430.2,353.5 425.4,348.5 421.3,343.4 418.1,338.1 415.8,332.2 414.4,325.9 413.6,320.0 413.0,315.2 412.7,312.2 412.8,310.4 413.2,309.0Z" fill="none" stroke="#062c0a" stroke-width="1.1" />
<g clip-path="url(#cp1)"><path d="M859.4,616.4 860.2,613.7 861.2,610.7 862.6,607.5 864.5,604.2 866.9,600.7 869.8,597.1 873.1,593.4 876.7,590.0 880.7,586.8 885.2,583.7 890.0,580.7 895.0,577.8 900.3,574.8 905.9,571.9 911.6,569.1 917.3,566.6 922.9,564.5 928.6,562.6 934.2,561.0 939.6,559.5 944.9,558.3 949.9,557.3 954.9,556.5 959.9,555.9 965.1,555.5 970.4,555.2 975.5,555.2 980.3,555.5 984.7,555.9 989.0,556.4 993.0,557.3 996.5,558.5 999.6,560.2 1002.3,562.2 1004.6,564.5 1006.6,566.6 1008.1,568.7 1009.1,570.8 1010.1,572.8 1011.7,574.7 1013.9,576.6 1016.5,578.5 1019.5,580.1 1022.9,581.4 1027.1,582.4 1031.8,583.2 1036.7,583.6 1041.2,583.9 1045.1,583.8 1048.8,583.5 1052.2,583.0 1055.4,582.5 1058.2,581.9 1060.7,581.2 1063.1,580.5 1065.5,579.8 1067.7,579.2 1069.7,578.6 1072.1,578.0 1075.7,577.4 1080.8,576.6 1087.1,575.6 1093.8,574.9 1100.1,574.7 1105.9,575.4 1111.6,576.5 1117.1,578.0 1122.4,579.8 1127.3,581.6 1132.0,583.5 1136.4,586.1 1140.7,590.0 1144.9,596.0 1149.1,603.6 1152.9,611.2 1156.1,617.3 1158.5,621.2 1160.3,623.8 1161.7,626.1 1162.9,628.7 1164.0,632.0 1164.8,635.4 1165.2,638.9 1165.2,642.4 1164.7,645.9 1163.6,649.5 1162.3,652.9 1160.6,656.1 1158.8,659.0 1156.6,661.8 1154.2,664.2 1151.5,666.4 1148.4,668.2 1144.9,669.7 1141.3,671.0 1137.8,672.1 1134.5,673.0 1131.2,673.7 1127.8,674.3 1124.1,674.8 1119.9,675.3 1115.2,675.7 1110.5,676.1 1105.8,676.7 1101.1,677.4 1096.3,678.1 1091.6,679.0 1087.6,680.1 1084.1,681.3 1081.0,682.6 1078.3,684.1 1076.1,685.8 1074.4,687.8 1073.2,690.0 1072.3,692.4 1071.6,694.9 1071.1,697.7 1071.1,700.7 1070.9,703.6 1070.4,706.4 1069.5,708.8 1068.4,711.1 1066.8,713.3 1064.7,715.5 1062.0,717.9 1058.6,720.4 1054.9,722.7 1051.0,724.6 1046.9,726.2 1042.4,727.4 1037.7,728.4 1032.7,729.2 1027.6,729.8 1022.2,730.1 1016.4,730.3 1009.9,730.3 1002.4,730.3 994.0,730.1 985.6,729.8 977.9,729.2 971.1,728.4 964.8,727.3 958.7,726.0 952.8,724.6 946.9,723.1 941.1,721.5 935.4,719.7 929.9,717.8 924.5,715.7 919.1,713.4 914.0,711.0 909.4,708.7 905.2,706.4 901.5,704.1 898.2,701.8 895.7,699.5 893.9,697.2 892.9,694.9 892.4,692.7 892.3,690.4 892.4,688.1 893.0,685.8 894.1,683.5 895.7,681.2 898.1,679.0 901.3,676.8 904.5,674.5 907.1,672.1 908.9,669.4 910.4,666.4 911.3,663.4 911.7,660.7 911.4,658.2 910.5,655.9 909.1,653.7 907.1,651.5 904.4,649.5 901.1,647.5 897.4,645.5 893.4,643.6 889.1,641.6 884.4,639.8 879.6,637.8 875.1,635.6 870.6,632.9 866.0,629.8 861.9,626.8 859.1,624.1 858.0,622.0 858.0,620.3 858.6,618.5Z" fill="none" stroke="#0a3a10" stroke-width="1"/></g>
<path d="M859.4,541.4 860.2,538.7 861.2,535.7 862.6,532.5 864.5,529.2 866.9,525.7 869.8,522.1 873.1,518.4 876.7,515.0 880.7,511.8 885.2,508.7 890.0,505.7 895.0,502.8 900.3,499.8 905.9,496.9 911.6,494.1 917.3,491.6 922.9,489.5 928.6,487.6 934.2,486.0 939.6,484.5 944.9,483.3 949.9,482.3 954.9,481.5 959.9,480.9 965.1,480.5 970.4,480.2 975.5,480.2 980.3,480.5 984.7,480.9 989.0,481.4 993.0,482.3 996.5,483.5 999.6,485.2 1002.3,487.2 1004.6,489.5 1006.6,491.6 1008.1,493.7 1009.1,495.8 1010.1,497.8 1011.7,499.7 1013.9,501.6 1016.5,503.5 1019.5,505.1 1022.9,506.4 1027.1,507.4 1031.8,508.2 1036.7,508.6 1041.2,508.9 1045.1,508.8 1048.8,508.5 1052.2,508.0 1055.4,507.5 1058.2,506.9 1060.7,506.2 1063.1,505.5 1065.5,504.8 1067.7,504.2 1069.7,503.6 1072.1,503.0 1075.7,502.4 1080.8,501.6 1087.1,500.6 1093.8,499.9 1100.1,499.7 1105.9,500.4 1111.6,501.5 1117.1,503.0 1122.4,504.8 1127.3,506.6 1132.0,508.5 1136.4,511.1 1140.7,515.0 1144.9,521.0 1149.1,528.6 1152.9,536.2 1156.1,542.3 1158.5,546.2 1160.3,548.8 1161.7,551.1 1162.9,553.7 1164.0,557.0 1164.8,560.4 1165.2,563.9 1165.2,567.4 1164.7,570.9 1163.6,574.5 1162.3,577.9 1160.6,581.1 1158.8,584.0 1156.6,586.8 1154.2,589.2 1151.5,591.4 1148.4,593.2 1144.9,594.7 1141.3,596.0 1137.8,597.1 1134.5,598.0 1131.2,598.7 1127.8,599.3 1124.1,599.8 1119.9,600.3 1115.2,600.7 1110.5,601.1 1105.8,601.7 1101.1,602.4 1096.3,603.1 1091.6,604.0 1087.6,605.1 1084.1,606.3 1081.0,607.6 1078.3,609.1 1076.1,610.8 1074.4,612.8 1073.2,615.0 1072.3,617.4 1071.6,619.9 1071.1,622.7 1071.1,625.7 1070.9,628.6 1070.4,631.4 1069.5,633.8 1068.4,636.1 1066.8,638.3 1064.7,640.5 1062.0,642.9 1058.6,645.4 1054.9,647.7 1051.0,649.6 1046.9,651.2 1042.4,652.4 1037.7,653.4 1032.7,654.2 1027.6,654.8 1022.2,655.1 1016.4,655.3 1009.9,655.3 1002.4,655.3 994.0,655.1 985.6,654.8 977.9,654.2 971.1,653.4 964.8,652.3 958.7,651.0 952.8,649.6 946.9,648.1 941.1,646.5 935.4,644.7 929.9,642.8 924.5,640.7 919.1,638.4 914.0,636.0 909.4,633.7 905.2,631.4 901.5,629.1 898.2,626.8 895.7,624.5 893.9,622.2 892.9,619.9 892.4,617.7 892.3,615.4 892.4,613.1 893.0,610.8 894.1,608.5 895.7,606.2 898.1,604.0 901.3,601.8 904.5,599.5 907.1,597.1 908.9,594.4 910.4,591.4 911.3,588.4 911.7,585.7 911.4,583.2 910.5,580.9 909.1,578.7 907.1,576.5 904.4,574.5 901.1,572.5 897.4,570.5 893.4,568.6 889.1,566.6 884.4,564.8 879.6,562.8 875.1,560.6 870.6,557.9 866.0,554.8 861.9,551.8 859.1,549.1 858.0,547.0 858.0,545.3 858.6,543.5Z" fill="none" stroke="#062c0a" stroke-width="1.1" />
<ellipse cx="469.4" cy="253.6" rx="19.5" ry="11.3" fill="none" stroke="#0a3a10" stroke-width="0.9" />
<ellipse cx="705.5" cy="291.7" rx="19.5" ry="11.3" fill="none" stroke="#0a3a10" stroke-width="0.9" />
<ellipse cx="532.3" cy="388.8" rx="19.5" ry="11.3" fill="none" stroke="#0a3a10" stroke-width="0.9" />
<ellipse cx="872.8" cy="585.7" rx="19.5" ry="11.3" fill="none" stroke="#0a3a10" stroke-width="0.9" />
<ellipse cx="1107.0" cy="623.4" rx="19.5" ry="11.3" fill="none" stroke="#0a3a10" stroke-width="0.9" />
<ellipse cx="1046.0" cy="489.5" rx="19.5" ry="11.3" fill="none" stroke="#0a3a10" stroke-width="0.9" />
<g clip-path="url(#cp0)"><ellipse cx="570.4" cy="384" rx="76" ry="44" fill="none" stroke="#0a3a10" stroke-width="0.9"/></g>
<g clip-path="url(#cp1)"><ellipse cx="998.5" cy="634" rx="70" ry="40.5" fill="none" stroke="#0a3a10" stroke-width="0.9"/></g>
<g clip-path="url(#cw0)"><path d="M434,150L434,800" stroke="#7a9672" stroke-width="2.2" opacity="0.85" fill="none"/><path d="M459.3,150L459.3,800" stroke="#7a9672" stroke-width="2.2" opacity="0.85" fill="none"/><path d="M511.3,150L511.3,800" stroke="#7a9672" stroke-width="1.8" opacity="0.85" fill="none"/><path d="M529,150L529,800" stroke="#7a9672" stroke-width="2.2" opacity="0.85" fill="none"/><path d="M675,150L675,290" stroke="#7a9672" stroke-width="1.4" opacity="0.7" fill="none"/><path d="M696.6,150L696.6,800" stroke="#7a9672" stroke-width="1.8" opacity="0.85" fill="none"/><path d="M713,150L713,800" stroke="#7a9672" stroke-width="1.2" opacity="0.6" fill="none"/><path d="M418.5,150L418.5,800" stroke="#02300a" stroke-width="1.0" opacity="0.5" fill="none"/><path d="M503.5,150L503.5,800" stroke="#02300a" stroke-width="1.0" opacity="0.5" fill="none"/><path d="M536,150L536,800" stroke="#02300a" stroke-width="1.0" opacity="0.5" fill="none"/><path d="M688,150L688,800" stroke="#02300a" stroke-width="1.0" opacity="0.5" fill="none"/></g>
<g clip-path="url(#cw1)"><path d="M964,150L964,800" stroke="#7a9672" stroke-width="2.6" opacity="0.85" fill="none"/><path d="M979.2,150L979.2,800" stroke="#7a9672" stroke-width="1.2" opacity="0.5" fill="none"/><path d="M989.4,150L989.4,800" stroke="#7a9672" stroke-width="2.6" opacity="0.85" fill="none"/><path d="M997.5,150L997.5,800" stroke="#7a9672" stroke-width="1.2" opacity="0.6" fill="none"/><path d="M1005.6,150L1005.6,800" stroke="#7a9672" stroke-width="1.2" opacity="0.6" fill="none"/><path d="M1075.7,150L1075.7,800" stroke="#7a9672" stroke-width="2.2" opacity="0.7" fill="none"/><path d="M1100,150L1100,800" stroke="#7a9672" stroke-width="2.4" opacity="0.85" fill="none"/><path d="M1122.4,150L1122.4,800" stroke="#7a9672" stroke-width="1.4" opacity="0.7" fill="none"/><path d="M896.8,598L896.8,700" stroke="#7a9672" stroke-width="1.4" opacity="0.6" fill="none"/><path d="M903.7,598L903.7,700" stroke="#7a9672" stroke-width="1.2" opacity="0.5" fill="none"/><path d="M948,150L948,800" stroke="#02300a" stroke-width="1.0" opacity="0.5" fill="none"/><path d="M1012,150L1012,800" stroke="#02300a" stroke-width="1.0" opacity="0.5" fill="none"/><path d="M1060,150L1060,800" stroke="#02300a" stroke-width="1.0" opacity="0.5" fill="none"/></g>
<path d="M678,403.5L678,453" stroke="#7a9672" stroke-width="1.8" opacity="0.85" fill="none"/>
<path d="M702.4,405L702.4,454" stroke="#7a9672" stroke-width="1.8" opacity="0.85" fill="none"/>
<path d="M661.8,408L661.8,455" stroke="#0a3a10" stroke-width="1.0" opacity="0.7" fill="none"/>
<path d="M716,410L716,461" stroke="#0a3a10" stroke-width="1.0" opacity="0.7" fill="none"/>
<path d="M826,590L826,650" stroke="#2a5a2c" stroke-width="1.0" opacity="0.6" fill="none"/>
<path d="M831,592L831,655" stroke="#2a5a2c" stroke-width="1.0" opacity="0.6" fill="none"/>
<path d="M836.5,596L836.5,660" stroke="#2a5a2c" stroke-width="1.0" opacity="0.6" fill="none"/>
<g>
<ellipse cx="839" cy="75" rx="300" ry="150" fill="rgb(95,100,112)" fill-opacity="0.22"/>
<path d="M719.0,100.0 719.0,162.0 726.0,180.0 781.0,294.0 781.6,300.9 782.7,304.5 784.5,308.0 786.8,311.4 789.8,314.7 793.2,317.7 797.2,320.6 801.6,323.2 806.5,325.5 811.7,327.6 817.3,329.3 823.1,330.8 829.2,331.8 835.4,332.6 841.7,332.9 848.0,333.0 854.3,332.6 860.5,331.9 866.5,330.8 872.4,329.4 878.0,327.7 883.2,325.7 888.1,323.4 892.6,320.8 896.6,317.9 900.0,314.9 903.0,311.6 905.4,308.2 907.2,304.7 908.4,301.1 909.0,292.0 960.0,180.0 967.0,162.0 967.0,100.0Z" fill="rgb(90,95,106)" fill-opacity="0.27"/>
<path d="M719.0,100.0 719.0,157.0 719.0,157.0 719.2,160.7 719.7,164.5 720.5,168.2 721.7,171.9 723.2,175.5 725.1,179.1 727.2,182.7 729.7,186.1 732.5,189.5 735.6,192.8 739.0,196.0 742.7,199.1 746.6,202.1 750.9,204.9 755.3,207.6 760.0,210.2 765.0,212.6 770.1,214.9 775.5,217.0 781.0,219.0 786.7,220.8 792.6,222.4 798.6,223.8 804.7,225.1 810.9,226.2 817.2,227.0 823.6,227.7 830.0,228.2 836.5,228.5 843.0,228.6 849.5,228.5 856.0,228.2 862.4,227.7 868.8,227.0 875.1,226.2 881.3,225.1 887.4,223.8 893.4,222.4 899.3,220.8 905.0,219.0 910.5,217.0 915.9,214.9 921.0,212.6 926.0,210.2 930.7,207.6 935.1,204.9 939.4,202.1 943.3,199.1 947.0,196.0 950.4,192.8 953.5,189.5 956.3,186.1 958.8,182.7 960.9,179.1 962.8,175.5 964.3,171.9 965.5,168.2 966.3,164.5 966.8,160.7 967.0,157.0 967.0,157.0 967.0,100.0Z" fill="rgb(88,94,106)" fill-opacity="0.36"/>
<path d="M656.8,99.0 662.3,102.5 668.2,105.8 674.6,109.1 681.4,112.2 688.6,115.2 696.2,118.0 704.1,120.6 712.4,123.1 721.1,125.4 730.0,127.5 739.2,129.5 748.7,131.3 758.3,132.8 768.2,134.2 778.2,135.3 788.4,136.3 798.7,137.0 809.1,137.6 819.5,137.9 830.0,138.0 840.5,137.9 850.9,137.6 861.3,137.0 871.6,136.3 881.8,135.3 891.8,134.2 901.7,132.8 911.3,131.3 920.8,129.5 930.0,127.5 938.9,125.4 947.6,123.1 955.9,120.6 963.8,118.0 971.4,115.2 978.6,112.2 985.4,109.1 991.8,105.8 997.7,102.5 1003.2,99.0" fill="none" stroke="rgb(70,75,86)" stroke-opacity="0.33" stroke-width="7"/>
<path d="M668.9,88.0 674.0,91.2 679.5,94.3 685.5,97.3 691.8,100.2 698.5,102.9 705.5,105.5 712.9,108.0 720.7,110.2 728.7,112.4 737.0,114.4 745.6,116.2 754.3,117.8 763.3,119.2 772.5,120.5 781.9,121.5 791.3,122.4 800.9,123.1 810.6,123.6 820.3,123.9 830.0,124.0 839.7,123.9 849.4,123.6 859.1,123.1 868.7,122.4 878.1,121.5 887.5,120.5 896.7,119.2 905.7,117.8 914.4,116.2 923.0,114.4 931.3,112.4 939.3,110.2 947.1,108.0 954.5,105.5 961.5,102.9 968.2,100.2 974.5,97.3 980.5,94.3 986.0,91.2 991.1,88.0 1100.0,90.0 560.0,90.0Z" fill="#ffffff" fill-opacity="0.18"/>
<path d="M803.9,269.0 804.1,266.7 804.7,264.4 805.8,262.2 807.2,260.1 809.1,258.0 811.3,256.1 813.8,254.3 816.7,252.7 819.8,251.2 823.2,249.9 826.8,248.9 830.6,248.1 834.5,247.5 838.5,247.1 842.5,247.0 846.5,247.1 850.5,247.5 854.4,248.1 858.2,248.9 861.8,249.9 865.2,251.2 868.3,252.7 871.2,254.3 873.7,256.1 875.9,258.0 877.8,260.1 879.2,262.2 880.3,264.4 880.9,266.7 881.1,269.0 881.1,500.0 880.9,502.3 880.3,504.6 879.2,506.8 877.8,508.9 875.9,511.0 873.7,512.9 871.2,514.7 868.3,516.3 865.2,517.8 861.8,519.1 858.2,520.1 854.4,520.9 850.5,521.5 846.5,521.9 842.5,522.0 838.5,521.9 834.5,521.5 830.6,520.9 826.8,520.1 823.2,519.1 819.8,517.8 816.7,516.3 813.8,514.7 811.3,512.9 809.1,511.0 807.2,508.9 805.8,506.8 804.7,504.6 804.1,502.3 803.9,500.0Z" fill="rgb(55,55,55)" fill-opacity="0.30"/>
<ellipse cx="842.5" cy="310" rx="38.6" ry="22" fill="rgb(40,40,40)" fill-opacity="0.42"/>
</g>
<path d="M998.9,450.2 1008.0,450.0 1017.2,450.1 1026.3,450.4 1035.3,450.9 1044.4,451.6 1053.4,452.6 1062.2,453.8 1071.0,455.2 1079.7,456.8 1088.3,458.7 1096.7,460.7 1104.9,463.0 1113.0,465.4 1120.9,468.1 1128.5,470.9 1136.0,474.0 1143.2,477.2 1150.2,480.6 1156.9,484.2 1163.4,487.9 1169.5,491.8 1175.4,495.9 1180.9,500.0 1186.2,504.4 1191.1,508.8 1195.7,513.4 1199.9,518.0 1203.8,522.8 1207.3,527.7 1210.4,532.6 1213.2,537.6 1215.6,542.7 1217.7,547.9 1219.3,553.1 1220.6,558.3 1221.4,563.5 1221.9,568.8 1222.0,574.1 1221.7,579.3 1221.0,584.6 1219.9,589.8 1218.4,595.0 1216.5,600.2 1214.3,605.3 1211.6,610.4 1208.6,615.3 1205.2,620.2 1201.5,625.0 1197.4,629.8 1193.0,634.4 1188.2,638.9 1183.1,643.2 1177.7,647.5 1171.9,651.6 1165.9,655.5 1159.6,659.3 1153.0,663.0 1146.1,666.4 1139.0,669.7 1131.6,672.8 1124.0,675.8 1116.2,678.5 1108.2,681.1 1100.0,683.4 1091.7,685.5 1083.2,687.5 1074.6,689.2 1065.8,690.7 1057.0,692.0 1048.0,693.0 1039.0,693.8 1030.0,694.5 1020.8,694.8 1011.7,695.0 1002.6,694.9 993.5,694.6 984.4,694.1 975.4,693.4 966.4,692.4 957.5,691.2 948.7,689.8 940.0,688.1 931.5,686.3 923.1,684.2 914.9,682.0 906.8,679.5 898.9,676.8 891.2,674.0 883.8,670.9 876.6,667.7 869.6,664.3 862.9,660.7 856.5,657.0 850.3,653.1 844.5,649.0 838.9,644.8 833.7,640.5 828.8,636.1 824.2,631.5 820.0,626.8 816.1,622.1 812.6,617.2 809.5,612.2 806.7,607.2 804.3,602.1 802.3,597.0 800.6,591.8 799.4,586.6 798.6,581.3 798.1,576.1 798.0,570.8 798.3,565.5 799.1,560.3 800.2,555.0 801.7,549.8 803.5,544.7 805.8,539.6 808.5,534.5 811.5,529.5 814.9,524.6 818.0,519.5 818.8,518.1 820.0,516.1 821.3,513.9 822.5,512.0 823.6,510.4 824.7,508.8 825.7,507.4 826.3,506.0 826.5,504.7 826.5,503.5 826.1,502.3 825.3,501.0 824.3,499.9 823.1,498.8 821.1,497.5 818.0,495.5 813.3,492.6 807.3,489.0 800.7,485.0 794.0,481.0 787.2,476.9 780.1,472.6 773.0,468.2 766.0,464.0 759.5,460.1 753.2,456.3 746.8,452.5 740.0,448.5 732.1,443.9 723.4,439.0 715.2,434.4 708.4,430.8 703.9,428.6 700.8,427.3 698.2,426.4 695.0,425.6 691.1,424.6 686.9,423.7 682.5,423.1 678.0,423.0 673.6,423.5 669.1,424.5 664.4,425.7 659.0,427.0 652.7,428.4 645.8,430.0 638.7,431.6 632.0,433.0 625.2,434.2 618.3,435.4 612.2,436.3 608.0,437.0 592.3,439.8 585.0,440.2 577.8,440.4 570.5,440.5 563.2,440.4 555.9,440.2 548.7,439.9 541.5,439.4 534.3,438.8 527.1,438.0 520.0,437.1 513.0,436.0 506.0,434.8 499.1,433.5 492.3,432.1 485.6,430.5 478.9,428.7 472.4,426.9 466.0,424.9 459.7,422.8 453.5,420.6 447.5,418.2 441.6,415.8 435.9,413.2 430.3,410.5 424.9,407.7 419.7,404.8 414.6,401.8 409.7,398.7 405.0,395.5 400.5,392.2 396.2,388.8 392.1,385.4 388.2,381.8 384.5,378.2 381.1,374.6 377.8,370.8 374.8,367.0 372.0,363.2 369.4,359.2 367.1,355.3 365.0,351.3 363.1,347.2 361.5,343.1 360.2,339.0 359.0,334.9 358.2,330.7 357.5,326.6 357.1,322.4 357.0,318.2 357.1,314.0 357.5,309.9 358.1,305.7 358.9,301.5 360.0,297.4 361.4,293.3 363.0,289.2 364.8,285.1 366.9,281.1 369.2,277.2 371.7,273.2 374.5,269.4 377.5,265.6 380.7,261.8 384.2,258.1 387.8,254.5 391.7,251.0 395.8,247.5 400.1,244.1 404.6,240.8 409.2,237.6 414.1,234.5 419.2,231.5 424.4,228.6 429.8,225.8 435.3,223.1 441.1,220.5 446.9,218.0 452.9,215.7 459.1,213.4 465.3,211.3 471.7,209.3 478.3,207.4 484.9,205.7 491.6,204.1 498.4,202.6 505.3,201.3 512.3,200.1 519.3,199.0 526.4,198.1 533.5,197.3 540.7,196.7 547.9,196.2 555.2,195.8 562.5,195.6 569.7,195.5 577.0,195.6 584.3,195.8 591.5,196.1 598.7,196.6 605.9,197.3 613.1,198.0 620.2,198.9 627.2,200.0 634.2,201.2 641.1,202.5 647.9,204.0 654.6,205.6 661.3,207.3 667.8,209.2 674.2,211.2 680.5,213.3 686.6,215.5 692.6,217.8 698.5,220.3 704.3,222.9 709.8,225.6 715.2,228.4 720.5,231.3 725.5,234.3 730.4,237.4 735.1,240.6 739.6,243.9 743.9,247.3 748.0,250.7 751.9,254.3 755.6,257.9 759.0,261.5 762.3,265.3 765.3,269.1 768.1,273.0 770.6,276.9 773.0,280.8 775.1,284.9 776.9,288.9 778.5,293.0 779.9,297.1 781.0,301.2 781.9,305.4 782.5,309.5 782.9,313.7 782.9,314.0 782.7,316.1 782.4,319.0 781.9,322.4 781.0,326.0 779.9,329.5 778.5,333.2 776.7,337.3 774.3,342.0 771.0,347.7 767.0,354.3 763.0,360.8 759.4,366.7 756.3,372.0 753.5,376.9 751.2,381.1 749.5,384.0 752.0,390.0 756.3,392.6 762.1,396.2 769.2,400.6 777.5,405.7 786.7,411.3 797.8,418.0 810.8,426.0 824.5,434.3 837.5,442.1 848.6,448.4 857.6,453.2 865.4,457.0 872.2,460.0 878.1,462.5 883.3,464.5 887.5,466.0 890.5,466.8 892.9,467.1 895.2,467.1 898.0,467.0 901.2,466.7 904.6,466.1 908.0,465.3 911.6,464.3 915.5,463.3 919.5,462.2 923.6,460.9 927.9,459.5 932.6,458.2 937.8,457.0 943.7,455.9 950.1,455.0 956.9,454.1 963.6,453.2 970.0,452.5 976.5,451.9 983.2,451.3 989.6,450.8 995.1,450.5 999.0,450.2Z" fill="none" stroke="#4a4fe0" stroke-width="1.3" stroke-linejoin="round"/>
<g clip-path="url(#cgreen)"><path d="M998.9,450.2 1008.0,450.0 1017.2,450.1 1026.3,450.4 1035.3,450.9 1044.4,451.6 1053.4,452.6 1062.2,453.8 1071.0,455.2 1079.7,456.8 1088.3,458.7 1096.7,460.7 1104.9,463.0 1113.0,465.4 1120.9,468.1 1128.5,470.9 1136.0,474.0 1143.2,477.2 1150.2,480.6 1156.9,484.2 1163.4,487.9 1169.5,491.8 1175.4,495.9 1180.9,500.0 1186.2,504.4 1191.1,508.8 1195.7,513.4 1199.9,518.0 1203.8,522.8 1207.3,527.7 1210.4,532.6 1213.2,537.6 1215.6,542.7 1217.7,547.9 1219.3,553.1 1220.6,558.3 1221.4,563.5 1221.9,568.8 1222.0,574.1 1221.7,579.3 1221.0,584.6 1219.9,589.8 1218.4,595.0 1216.5,600.2 1214.3,605.3 1211.6,610.4 1208.6,615.3 1205.2,620.2 1201.5,625.0 1197.4,629.8 1193.0,634.4 1188.2,638.9 1183.1,643.2 1177.7,647.5 1171.9,651.6 1165.9,655.5 1159.6,659.3 1153.0,663.0 1146.1,666.4 1139.0,669.7 1131.6,672.8 1124.0,675.8 1116.2,678.5 1108.2,681.1 1100.0,683.4 1091.7,685.5 1083.2,687.5 1074.6,689.2 1065.8,690.7 1057.0,692.0 1048.0,693.0 1039.0,693.8 1030.0,694.5 1020.8,694.8 1011.7,695.0 1002.6,694.9 993.5,694.6 984.4,694.1 975.4,693.4 966.4,692.4 957.5,691.2 948.7,689.8 940.0,688.1 931.5,686.3 923.1,684.2 914.9,682.0 906.8,679.5 898.9,676.8 891.2,674.0 883.8,670.9 876.6,667.7 869.6,664.3 862.9,660.7 856.5,657.0 850.3,653.1 844.5,649.0 838.9,644.8 833.7,640.5 828.8,636.1 824.2,631.5 820.0,626.8 816.1,622.1 812.6,617.2 809.5,612.2 806.7,607.2 804.3,602.1 802.3,597.0 800.6,591.8 799.4,586.6 798.6,581.3 798.1,576.1 798.0,570.8 798.3,565.5 799.1,560.3 800.2,555.0 801.7,549.8 803.5,544.7 805.8,539.6 808.5,534.5 811.5,529.5 814.9,524.6 818.0,519.5 818.8,518.1 820.0,516.1 821.3,513.9 822.5,512.0 823.6,510.4 824.7,508.8 825.7,507.4 826.3,506.0 826.5,504.7 826.5,503.5 826.1,502.3 825.3,501.0 824.3,499.9 823.1,498.8 821.1,497.5 818.0,495.5 813.3,492.6 807.3,489.0 800.7,485.0 794.0,481.0 787.2,476.9 780.1,472.6 773.0,468.2 766.0,464.0 759.5,460.1 753.2,456.3 746.8,452.5 740.0,448.5 732.1,443.9 723.4,439.0 715.2,434.4 708.4,430.8 703.9,428.6 700.8,427.3 698.2,426.4 695.0,425.6 691.1,424.6 686.9,423.7 682.5,423.1 678.0,423.0 673.6,423.5 669.1,424.5 664.4,425.7 659.0,427.0 652.7,428.4 645.8,430.0 638.7,431.6 632.0,433.0 625.2,434.2 618.3,435.4 612.2,436.3 608.0,437.0 592.3,439.8 585.0,440.2 577.8,440.4 570.5,440.5 563.2,440.4 555.9,440.2 548.7,439.9 541.5,439.4 534.3,438.8 527.1,438.0 520.0,437.1 513.0,436.0 506.0,434.8 499.1,433.5 492.3,432.1 485.6,430.5 478.9,428.7 472.4,426.9 466.0,424.9 459.7,422.8 453.5,420.6 447.5,418.2 441.6,415.8 435.9,413.2 430.3,410.5 424.9,407.7 419.7,404.8 414.6,401.8 409.7,398.7 405.0,395.5 400.5,392.2 396.2,388.8 392.1,385.4 388.2,381.8 384.5,378.2 381.1,374.6 377.8,370.8 374.8,367.0 372.0,363.2 369.4,359.2 367.1,355.3 365.0,351.3 363.1,347.2 361.5,343.1 360.2,339.0 359.0,334.9 358.2,330.7 357.5,326.6 357.1,322.4 357.0,318.2 357.1,314.0 357.5,309.9 358.1,305.7 358.9,301.5 360.0,297.4 361.4,293.3 363.0,289.2 364.8,285.1 366.9,281.1 369.2,277.2 371.7,273.2 374.5,269.4 377.5,265.6 380.7,261.8 384.2,258.1 387.8,254.5 391.7,251.0 395.8,247.5 400.1,244.1 404.6,240.8 409.2,237.6 414.1,234.5 419.2,231.5 424.4,228.6 429.8,225.8 435.3,223.1 441.1,220.5 446.9,218.0 452.9,215.7 459.1,213.4 465.3,211.3 471.7,209.3 478.3,207.4 484.9,205.7 491.6,204.1 498.4,202.6 505.3,201.3 512.3,200.1 519.3,199.0 526.4,198.1 533.5,197.3 540.7,196.7 547.9,196.2 555.2,195.8 562.5,195.6 569.7,195.5 577.0,195.6 584.3,195.8 591.5,196.1 598.7,196.6 605.9,197.3 613.1,198.0 620.2,198.9 627.2,200.0 634.2,201.2 641.1,202.5 647.9,204.0 654.6,205.6 661.3,207.3 667.8,209.2 674.2,211.2 680.5,213.3 686.6,215.5 692.6,217.8 698.5,220.3 704.3,222.9 709.8,225.6 715.2,228.4 720.5,231.3 725.5,234.3 730.4,237.4 735.1,240.6 739.6,243.9 743.9,247.3 748.0,250.7 751.9,254.3 755.6,257.9 759.0,261.5 762.3,265.3 765.3,269.1 768.1,273.0 770.6,276.9 773.0,280.8 775.1,284.9 776.9,288.9 778.5,293.0 779.9,297.1 781.0,301.2 781.9,305.4 782.5,309.5 782.9,313.7 782.9,314.0 782.7,316.1 782.4,319.0 781.9,322.4 781.0,326.0 779.9,329.5 778.5,333.2 776.7,337.3 774.3,342.0 771.0,347.7 767.0,354.3 763.0,360.8 759.4,366.7 756.3,372.0 753.5,376.9 751.2,381.1 749.5,384.0 752.0,390.0 756.3,392.6 762.1,396.2 769.2,400.6 777.5,405.7 786.7,411.3 797.8,418.0 810.8,426.0 824.5,434.3 837.5,442.1 848.6,448.4 857.6,453.2 865.4,457.0 872.2,460.0 878.1,462.5 883.3,464.5 887.5,466.0 890.5,466.8 892.9,467.1 895.2,467.1 898.0,467.0 901.2,466.7 904.6,466.1 908.0,465.3 911.6,464.3 915.5,463.3 919.5,462.2 923.6,460.9 927.9,459.5 932.6,458.2 937.8,457.0 943.7,455.9 950.1,455.0 956.9,454.1 963.6,453.2 970.0,452.5 976.5,451.9 983.2,451.3 989.6,450.8 995.1,450.5 999.0,450.2Z" fill="none" stroke="#0a3d7c" stroke-width="1.8" stroke-linejoin="round"/></g>
<path d="M809.0,374.0 809.2,374.4 809.2,374.9 810.6,376.5 815.0,380.0 823.7,386.6 835.5,395.4 848.3,404.8 860.0,413.0 870.0,419.6 879.4,425.6 888.7,431.1 898.0,436.6 908.1,442.3 918.5,447.9 928.2,453.0 936.0,457.0 941.5,459.8 945.4,461.5 948.0,462.7 950.0,463.5" fill="none" stroke="#4a4fe0" stroke-width="1.3" stroke-linejoin="round"/>
<g clip-path="url(#cgreen)"><path d="M809.0,374.0 809.2,374.4 809.2,374.9 810.6,376.5 815.0,380.0 823.7,386.6 835.5,395.4 848.3,404.8 860.0,413.0 870.0,419.6 879.4,425.6 888.7,431.1 898.0,436.6 908.1,442.3 918.5,447.9 928.2,453.0 936.0,457.0 941.5,459.8 945.4,461.5 948.0,462.7 950.0,463.5" fill="none" stroke="#0a3d7c" stroke-width="1.8" stroke-linejoin="round"/></g>
<path d="M578.0,508.4 583.7,510.0 591.9,512.4 601.2,515.1 610.0,518.0 618.2,520.9 626.5,524.0 634.8,527.3 643.0,530.8 651.1,534.6 659.2,538.6 667.2,542.7 675.0,547.0 682.6,551.4 690.0,556.1 697.2,560.7 704.0,565.3 710.3,569.7 716.2,574.1 721.9,578.5 727.6,583.0 733.4,587.7 739.2,592.6 744.8,597.4 750.0,602.0 755.0,606.6 759.8,611.2 763.8,615.2 766.7,618.0" fill="none" stroke="#4a4fe0" stroke-width="1.3" stroke-linejoin="round"/>
<g clip-path="url(#cgreen)"><path d="M578.0,508.4 583.7,510.0 591.9,512.4 601.2,515.1 610.0,518.0 618.2,520.9 626.5,524.0 634.8,527.3 643.0,530.8 651.1,534.6 659.2,538.6 667.2,542.7 675.0,547.0 682.6,551.4 690.0,556.1 697.2,560.7 704.0,565.3 710.3,569.7 716.2,574.1 721.9,578.5 727.6,583.0 733.4,587.7 739.2,592.6 744.8,597.4 750.0,602.0 755.0,606.6 759.8,611.2 763.8,615.2 766.7,618.0" fill="none" stroke="#0a3d7c" stroke-width="1.8" stroke-linejoin="round"/></g>
<path d="M532.9,248.5 534.5,246.4 536.5,245.4 539.3,245.1 543.0,244.7 548.3,244.2 554.8,243.8 561.7,243.5 568.4,243.5 574.8,243.5 581.1,243.8 587.5,244.2 593.8,244.7 600.2,245.4 606.5,246.2 612.8,247.2 619.2,248.5 625.8,250.2 632.7,252.1 639.1,254.1 644.6,256.1 649.1,258.0 653.0,259.8 655.8,261.7 657.3,263.8 656.8,266.1 654.7,268.5 652.0,271.1 649.6,273.9 647.6,276.9 645.4,280.1 643.5,283.4 642.0,286.6 641.1,289.8 640.5,292.9 640.4,296.1 640.8,299.3 641.6,302.5 642.9,305.8 644.7,309.0 647.1,312.0 650.2,314.8 654.0,317.4 658.1,319.8 662.3,322.1 666.7,324.2 671.4,326.1 676.0,327.9 680.1,329.7 684.0,331.5 687.6,333.2 690.7,335.1 692.8,337.4 693.7,340.2 693.7,343.4 692.9,346.8 691.5,350.1 689.5,353.3 686.7,356.6 683.5,359.7 680.1,362.7 676.7,365.5 673.0,368.1 669.1,370.6 664.9,372.9 660.2,375.0 655.0,376.9 649.8,378.8 644.6,380.5 639.4,382.2 634.3,383.9 629.2,385.5 624.3,386.9 619.5,388.1 614.9,389.3 610.5,390.2 606.5,390.7 602.9,390.6 599.7,390.3 596.7,389.4 593.8,388.1 591.2,386.1 588.9,383.5 586.5,380.7 583.7,378.0 580.3,375.3 576.7,372.7 572.7,370.1 568.4,367.8 563.9,365.8 559.2,364.1 554.0,362.6 548.1,361.5 541.0,360.7 532.9,360.2 524.8,360.0 517.7,360.2 511.8,360.7 506.6,361.6 501.8,362.8 497.4,364.0 493.1,365.6 489.3,367.6 485.6,369.3 482.1,370.4 478.8,370.5 475.6,370.1 472.6,369.2 469.4,367.8 466.2,365.9 462.9,363.5 459.7,360.7 456.8,357.7 453.9,354.3 451.3,350.5 448.8,346.5 446.6,342.4 444.6,338.1 442.9,333.6 441.4,329.0 440.3,324.7 439.4,320.5 438.9,316.5 438.7,312.7 439.0,309.4 439.6,306.7 440.7,304.3 442.1,302.3 444.1,300.6 446.5,299.2 449.3,298.1 452.7,297.3 456.8,296.8 461.7,296.6 467.4,296.8 473.5,297.0 479.6,296.8 485.9,296.0 492.6,294.8 499.1,293.4 505.0,291.7 510.2,289.6 515.0,287.1 519.2,284.4 522.7,281.5 525.5,278.7 527.5,275.8 529.0,272.6 530.4,268.8 531.2,263.9 531.5,258.1 531.8,252.6Z" fill="none" stroke="#0a3d7c" stroke-width="1.3" stroke-linejoin="round"/>
<g clip-path="url(#cgreen)"><path d="M532.9,248.5 534.5,246.4 536.5,245.4 539.3,245.1 543.0,244.7 548.3,244.2 554.8,243.8 561.7,243.5 568.4,243.5 574.8,243.5 581.1,243.8 587.5,244.2 593.8,244.7 600.2,245.4 606.5,246.2 612.8,247.2 619.2,248.5 625.8,250.2 632.7,252.1 639.1,254.1 644.6,256.1 649.1,258.0 653.0,259.8 655.8,261.7 657.3,263.8 656.8,266.1 654.7,268.5 652.0,271.1 649.6,273.9 647.6,276.9 645.4,280.1 643.5,283.4 642.0,286.6 641.1,289.8 640.5,292.9 640.4,296.1 640.8,299.3 641.6,302.5 642.9,305.8 644.7,309.0 647.1,312.0 650.2,314.8 654.0,317.4 658.1,319.8 662.3,322.1 666.7,324.2 671.4,326.1 676.0,327.9 680.1,329.7 684.0,331.5 687.6,333.2 690.7,335.1 692.8,337.4 693.7,340.2 693.7,343.4 692.9,346.8 691.5,350.1 689.5,353.3 686.7,356.6 683.5,359.7 680.1,362.7 676.7,365.5 673.0,368.1 669.1,370.6 664.9,372.9 660.2,375.0 655.0,376.9 649.8,378.8 644.6,380.5 639.4,382.2 634.3,383.9 629.2,385.5 624.3,386.9 619.5,388.1 614.9,389.3 610.5,390.2 606.5,390.7 602.9,390.6 599.7,390.3 596.7,389.4 593.8,388.1 591.2,386.1 588.9,383.5 586.5,380.7 583.7,378.0 580.3,375.3 576.7,372.7 572.7,370.1 568.4,367.8 563.9,365.8 559.2,364.1 554.0,362.6 548.1,361.5 541.0,360.7 532.9,360.2 524.8,360.0 517.7,360.2 511.8,360.7 506.6,361.6 501.8,362.8 497.4,364.0 493.1,365.6 489.3,367.6 485.6,369.3 482.1,370.4 478.8,370.5 475.6,370.1 472.6,369.2 469.4,367.8 466.2,365.9 462.9,363.5 459.7,360.7 456.8,357.7 453.9,354.3 451.3,350.5 448.8,346.5 446.6,342.4 444.6,338.1 442.9,333.6 441.4,329.0 440.3,324.7 439.4,320.5 438.9,316.5 438.7,312.7 439.0,309.4 439.6,306.7 440.7,304.3 442.1,302.3 444.1,300.6 446.5,299.2 449.3,298.1 452.7,297.3 456.8,296.8 461.7,296.6 467.4,296.8 473.5,297.0 479.6,296.8 485.9,296.0 492.6,294.8 499.1,293.4 505.0,291.7 510.2,289.6 515.0,287.1 519.2,284.4 522.7,281.5 525.5,278.7 527.5,275.8 529.0,272.6 530.4,268.8 531.2,263.9 531.5,258.1 531.8,252.6Z" fill="none" stroke="#0a3d7c" stroke-width="1.8" stroke-linejoin="round"/></g>
<path d="M888.9,541.4 892.4,537.9 897.0,533.7 902.1,529.2 907.2,525.1 912.1,521.3 917.2,517.5 922.3,514.0 927.5,510.9 932.5,508.3 937.6,506.2 942.7,504.3 947.8,502.8 953.0,501.5 958.4,500.6 963.6,500.0 968.1,499.7 971.7,499.9 974.8,500.4 977.5,501.4 980.3,502.8 982.9,504.9 985.3,507.6 987.8,510.4 990.4,512.9 993.1,515.1 995.9,517.2 998.9,519.2 1002.6,521.1 1007.1,523.0 1012.2,524.9 1017.6,526.7 1022.9,528.2 1028.1,529.3 1033.3,530.1 1038.4,530.8 1043.2,531.2 1047.7,531.6 1052.0,531.7 1055.9,531.6 1059.4,531.2 1062.3,530.3 1064.5,529.0 1066.8,527.5 1069.6,526.1 1073.3,524.8 1077.5,523.4 1081.8,522.0 1085.8,521.1 1089.5,520.3 1093.1,519.8 1096.5,519.6 1100.1,520.1 1103.7,521.1 1107.3,522.8 1110.9,524.8 1114.3,527.2 1117.5,529.8 1120.7,532.7 1123.7,535.9 1126.4,539.3 1128.9,543.1 1131.0,547.1 1132.9,551.3 1134.6,555.6 1136.0,560.2 1137.2,565.2 1138.0,570.0 1138.3,574.3 1138.0,578.0 1137.2,581.3 1136.0,584.2 1134.4,586.8 1132.6,589.1 1130.4,591.1 1127.7,592.6 1124.1,593.7 1119.3,594.0 1113.5,593.6 1107.3,593.1 1101.3,593.0 1095.4,593.4 1089.6,593.9 1083.8,594.8 1078.4,596.0 1073.4,597.5 1068.6,599.4 1064.1,601.6 1060.1,604.0 1056.6,606.5 1053.6,609.3 1050.9,612.3 1048.7,615.4 1047.0,618.7 1045.9,622.2 1045.0,625.8 1044.2,629.1 1043.8,632.2 1043.9,635.3 1043.5,638.1 1041.9,640.5 1038.6,642.5 1034.2,644.1 1029.0,645.3 1023.6,646.2 1018.0,646.7 1012.0,646.9 1005.6,646.7 998.5,646.2 990.3,645.2 981.2,643.8 972.2,642.1 964.2,640.5 957.6,638.9 951.8,637.1 946.5,635.4 941.4,633.7 936.2,631.9 931.1,630.2 926.6,628.5 923.1,626.8 920.7,625.1 919.2,623.5 918.5,621.8 918.5,619.9 919.4,617.9 921.1,615.8 923.2,613.5 925.4,610.8 927.7,607.7 930.3,604.2 932.7,600.6 934.5,597.1 935.6,593.7 936.3,590.4 936.4,587.0 935.7,583.4 934.0,579.4 931.6,575.1 928.6,571.0 925.4,567.4 921.8,564.5 917.7,562.0 913.5,559.9 909.4,558.3 905.2,557.3 901.0,557.0 896.9,556.7 893.4,556.0 890.3,554.6 887.5,552.9 885.4,551.0 884.3,549.1 884.1,547.5 884.9,545.8 886.4,543.9Z" fill="none" stroke="#0a3d7c" stroke-width="1.3" stroke-linejoin="round"/>
<g clip-path="url(#cgreen)"><path d="M888.9,541.4 892.4,537.9 897.0,533.7 902.1,529.2 907.2,525.1 912.1,521.3 917.2,517.5 922.3,514.0 927.5,510.9 932.5,508.3 937.6,506.2 942.7,504.3 947.8,502.8 953.0,501.5 958.4,500.6 963.6,500.0 968.1,499.7 971.7,499.9 974.8,500.4 977.5,501.4 980.3,502.8 982.9,504.9 985.3,507.6 987.8,510.4 990.4,512.9 993.1,515.1 995.9,517.2 998.9,519.2 1002.6,521.1 1007.1,523.0 1012.2,524.9 1017.6,526.7 1022.9,528.2 1028.1,529.3 1033.3,530.1 1038.4,530.8 1043.2,531.2 1047.7,531.6 1052.0,531.7 1055.9,531.6 1059.4,531.2 1062.3,530.3 1064.5,529.0 1066.8,527.5 1069.6,526.1 1073.3,524.8 1077.5,523.4 1081.8,522.0 1085.8,521.1 1089.5,520.3 1093.1,519.8 1096.5,519.6 1100.1,520.1 1103.7,521.1 1107.3,522.8 1110.9,524.8 1114.3,527.2 1117.5,529.8 1120.7,532.7 1123.7,535.9 1126.4,539.3 1128.9,543.1 1131.0,547.1 1132.9,551.3 1134.6,555.6 1136.0,560.2 1137.2,565.2 1138.0,570.0 1138.3,574.3 1138.0,578.0 1137.2,581.3 1136.0,584.2 1134.4,586.8 1132.6,589.1 1130.4,591.1 1127.7,592.6 1124.1,593.7 1119.3,594.0 1113.5,593.6 1107.3,593.1 1101.3,593.0 1095.4,593.4 1089.6,593.9 1083.8,594.8 1078.4,596.0 1073.4,597.5 1068.6,599.4 1064.1,601.6 1060.1,604.0 1056.6,606.5 1053.6,609.3 1050.9,612.3 1048.7,615.4 1047.0,618.7 1045.9,622.2 1045.0,625.8 1044.2,629.1 1043.8,632.2 1043.9,635.3 1043.5,638.1 1041.9,640.5 1038.6,642.5 1034.2,644.1 1029.0,645.3 1023.6,646.2 1018.0,646.7 1012.0,646.9 1005.6,646.7 998.5,646.2 990.3,645.2 981.2,643.8 972.2,642.1 964.2,640.5 957.6,638.9 951.8,637.1 946.5,635.4 941.4,633.7 936.2,631.9 931.1,630.2 926.6,628.5 923.1,626.8 920.7,625.1 919.2,623.5 918.5,621.8 918.5,619.9 919.4,617.9 921.1,615.8 923.2,613.5 925.4,610.8 927.7,607.7 930.3,604.2 932.7,600.6 934.5,597.1 935.6,593.7 936.3,590.4 936.4,587.0 935.7,583.4 934.0,579.4 931.6,575.1 928.6,571.0 925.4,567.4 921.8,564.5 917.7,562.0 913.5,559.9 909.4,558.3 905.2,557.3 901.0,557.0 896.9,556.7 893.4,556.0 890.3,554.6 887.5,552.9 885.4,551.0 884.3,549.1 884.1,547.5 884.9,545.8 886.4,543.9Z" fill="none" stroke="#0a3d7c" stroke-width="1.8" stroke-linejoin="round"/></g>
<path d="M624.8,299.0 624.8,153.0 812.0,164.0 812.0,245.0" fill="none" stroke="#e8f08c" stroke-width="1.5" stroke-linejoin="round"/>
<g clip-path="url(#cgreen)"><path d="M624.8,299.0 624.8,153.0 812.0,164.0 812.0,245.0" fill="none" stroke="#b2d420" stroke-width="2.0" stroke-linejoin="round"/></g>
<path d="M812,245L812,362L808.8,369.5" fill="none" stroke="#d04a40" stroke-width="1.3"/>
<path d="M808.8,369.5L809.5,374" fill="none" stroke="#40c040" stroke-width="1.3"/>
<path d="M633.4,252.7 1064.0,523.0 1064.0,590.0" fill="none" stroke="#e8f08c" stroke-width="1.5" stroke-linejoin="round"/>
<g clip-path="url(#cgreen)"><path d="M633.4,252.7 1064.0,523.0 1064.0,590.0" fill="none" stroke="#b2d420" stroke-width="2.0" stroke-linejoin="round"/></g>
<path d="M633.0,254.0 633.0,317.0" fill="none" stroke="#a4601c" stroke-width="1.3"/>
<path d="M633,317L638,310" fill="none" stroke="#50b040" stroke-width="1"/>
<path d="M555.0,312.0 555.0,509.4 575.4,508.0" fill="none" stroke="#e8f08c" stroke-width="1.5" stroke-linejoin="round"/>
<g clip-path="url(#cgreen)"><path d="M555.0,312.0 555.0,509.4 575.4,508.0" fill="none" stroke="#b2d420" stroke-width="2.0" stroke-linejoin="round"/></g>
<path d="M555,301L551.2,313L558.8,313Z" fill="#30e030"/>
<path d="M1022.6,455.0 1022.6,365.5 765.5,512.5" fill="none" stroke="#e8f08c" stroke-width="1.5" stroke-linejoin="round"/>
<g clip-path="url(#cgreen)"><path d="M1022.6,455.0 1022.6,365.5 765.5,512.5" fill="none" stroke="#b2d420" stroke-width="2.0" stroke-linejoin="round"/></g>
<path d="M765.5,512.5 765.5,621.0" fill="none" stroke="#a4601c" stroke-width="1.3"/>
<path d="M765.5,621.0 768.5,629.0" fill="none" stroke="#e8f08c" stroke-width="1.5" stroke-linejoin="round"/>
<g clip-path="url(#cgreen)"><path d="M765.5,621.0 768.5,629.0" fill="none" stroke="#b2d420" stroke-width="2.0" stroke-linejoin="round"/></g>
<path d="M821.0,643.5 821.0,577.8 1040.0,538.5" fill="none" stroke="#e8f08c" stroke-width="1.5" stroke-linejoin="round"/>
<g clip-path="url(#cgreen)"><path d="M821.0,643.5 821.0,577.8 1040.0,538.5" fill="none" stroke="#b2d420" stroke-width="2.0" stroke-linejoin="round"/></g>
<path d="M1040.0,538.5 1040.0,602.0" fill="none" stroke="#a4601c" stroke-width="1.3"/>
<path d="M821.0,643.5 821.0,655.0" fill="none" stroke="#a4601c" stroke-width="1.3"/>
<path d="M842.5,511.0 842.5,615.0" fill="none" stroke="#e8f08c" stroke-width="1.5" stroke-linejoin="round"/>
<g clip-path="url(#cgreen)"><path d="M842.5,511.0 842.5,615.0" fill="none" stroke="#b2d420" stroke-width="2.0" stroke-linejoin="round"/></g>
<path d="M842.5,615.0 842.5,660.0" fill="none" stroke="#a4601c" stroke-width="1.3"/>
<path d="M842.5,660.0 845.0,668.0" fill="none" stroke="#e8f08c" stroke-width="1.5" stroke-linejoin="round"/>
<g clip-path="url(#cgreen)"><path d="M842.5,660.0 845.0,668.0" fill="none" stroke="#b2d420" stroke-width="2.0" stroke-linejoin="round"/></g>
<path d="M837.8,498.5L847.4,498.5L842.6,512Z" fill="#f23a1c"/>
<path d="M788.6,417.8L788.6,390" stroke="#1a30c8" stroke-width="1.5" fill="none"/><path d="M788.6,384.5L786.3,392L790.9,392Z" fill="#1a30c8"/>
<path d="M788.6,417.8L813,403.3" stroke="#2cd42c" stroke-width="1.4" fill="none"/><path d="M818,400.2L811,401.2L813.6,405.6Z" fill="#2cd42c"/>
<path d="M790,420.3L812.5,432" stroke="#e04a14" stroke-width="2.2" fill="none"/><path d="M818.5,435L811,435.5L813.6,430Z" fill="#f04a14"/>
<text x="791.5" y="378" font-family="Liberation Sans, sans-serif" font-size="7" font-style="italic" fill="#6a6ad8">z</text>
<text x="826" y="445.5" font-family="Liberation Sans, sans-serif" font-size="7" fill="#c06020">x</text>
<text x="826" y="398" font-family="Liberation Sans, sans-serif" font-size="6.5" fill="#80dc98">y</text>
</svg>
<svg style="position:absolute;left:0;top:0" width="1576" height="888" viewBox="0 0 1576 888"><path d="M1500,190l24,16 28,-18 6,8 -30,22z" fill="#ececec" opacity="0.600"/><path d="M1496.600,150.300L1523.200,139.200L1551.700,151L1523.200,167.700Z" fill="#efefef" stroke="#bcbcbc" stroke-width="0.700"/><path d="M1496.600,150.300L1523.200,167.700L1523.200,200.500L1496.600,183.200Z" fill="#e4e4e4" stroke="#b4b4b4" stroke-width="0.700"/><path d="M1523.200,167.700L1551.700,151L1550.500,182L1523.200,200.500Z" fill="#ebebeb" stroke="#b4b4b4" stroke-width="0.700"/><text transform="matrix(0.72,0.44,-0.74,0.43,1524,153.500)" x="0" y="6" text-anchor="middle" font-family="'Liberation Sans','Noto Sans CJK JP',sans-serif" font-size="16" fill="#8a8a8a">上</text><text transform="matrix(0.80,0.52,0,1,1510,175.500)" x="0" y="6.500" text-anchor="middle" font-family="'Liberation Sans','Noto Sans CJK JP',sans-serif" font-size="18" fill="#8a8a8a">前</text><text transform="matrix(0.82,-0.50,0,1,1537.500,175.500)" x="0" y="6.500" text-anchor="middle" font-family="'Liberation Sans','Noto Sans CJK JP',sans-serif" font-size="18" fill="#8a8a8a">右</text><path d="M1493.500,142.500L1496.600,184" stroke="#7a7ae0" stroke-width="1.400"/><path d="M1496.600,184.500l31.500,19.500" stroke="#f0a0a0" stroke-width="1.400"/><text x="1488.500" y="143.500" font-family="Liberation Sans,sans-serif" font-size="9.500" fill="#7070d8">Z</text><text x="1529.500" y="213" font-family="Liberation Sans,sans-serif" font-size="9.500" fill="#f08080">X</text><circle cx="1207" cy="346" r="18.500" fill="#f2de1c"/><path d="M1207.500,343.500v14.500l3.300,-3 2.300,5.300 2.200,-1 -2.300,-5.200 4.300,-0.300z" fill="#fff" stroke="#2a2a2a" stroke-width="0.900" stroke-linejoin="round"/></svg>
<div style="position:absolute;left:0;top:0;width:1576px;height:24px;background:#fff"></div>
<div style="position:absolute;left:0;top:0;width:1576px;height:4px;background:linear-gradient(#f2f2f2,#fbfbfb)"></div>
<svg style="position:absolute;left:4px;top:6px" width="12" height="14" viewBox="0 0 12 14"><rect x="0" y="0" width="11" height="13" rx="1.5" fill="#f7a65a"/><path d="M3,11V3h6v2H5.3v1.6H8.4v2H5.3V11z" fill="#fff"/><path d="M3,11l2.3,-2.4V11z" fill="#c8681c"/></svg>
<div style="position:absolute;left:21px;top:7px;font:9.9px 'Liberation Sans','Noto Sans CJK JP',sans-serif;color:#939393;letter-spacing:-0.1px;white-space:nowrap">Autodesk Fusion 360</div>
<svg style="position:absolute;left:1470px;top:4px" width="100" height="18" viewBox="0 0 100 18"><path d="M7,8.5h9" stroke="#b0b0b0" stroke-width="1"/><rect x="43.5" y="6.5" width="7" height="6" fill="#fff" stroke="#909090" stroke-width="1"/><path d="M45.5,6.5v-1.8h7v6h-2" fill="none" stroke="#909090" stroke-width="1"/><path d="M81,4l8,8M89,4l-8,8" stroke="#909090" stroke-width="1.1"/></svg>
<div style="position:absolute;left:0;top:22px;width:1576px;height:3px;background:linear-gradient(#e4e4e4,#c4c4c4)"></div>
<div style="position:absolute;left:0;top:25px;width:1576px;height:25px;background:#f0f0f0"></div>
<div style="position:absolute;left:2px;top:25px;width:193px;height:24px;background:#cfcfcf"></div>
<div style="position:absolute;left:160px;top:26px;width:34px;height:23px;background:#bebebe"></div>
<div style="position:absolute;left:1400px;top:25px;width:176px;height:24px;background:#cfcfcf"></div>
<div style="position:absolute;left:1403px;top:26px;width:25px;height:22px;background:#bcbcbc"></div>
<div style="position:absolute;left:0;top:25px;width:2px;height:863px;background:#fdfdfd"></div>
<svg style="position:absolute;left:0;top:0" width="1576" height="52" viewBox="0 0 1576 52"><g fill="#4a4a4a"><rect x="9.0" y="31.0" width="3" height="3"/><rect x="9.0" y="35.2" width="3" height="3"/><rect x="9.0" y="39.4" width="3" height="3"/><rect x="13.2" y="31.0" width="3" height="3"/><rect x="13.2" y="35.2" width="3" height="3"/><rect x="13.2" y="39.4" width="3" height="3"/><rect x="17.4" y="31.0" width="3" height="3"/><rect x="17.4" y="35.2" width="3" height="3"/><rect x="17.4" y="39.4" width="3" height="3"/></g><path d="M36,30h7l4,4v9h-11z" fill="#5a5a5a"/><path d="M52,35h5l-2.5,3z" fill="#4a4a4a"/><rect x="74.500" y="30.500" width="10" height="11" fill="#d8d8d8" stroke="#8a8a8a" stroke-width="1"/><rect x="76.500" y="30.500" width="6" height="3.500" fill="#bcbcbc" stroke="#8a8a8a" stroke-width="0.8"/><rect x="76.500" y="37" width="6" height="4.500" fill="#bcbcbc" stroke="#8a8a8a" stroke-width="0.8"/><path d="M110,41q-1,-6 -8,-6.500M106,31.500l-4.500,3 4,3.500" fill="none" stroke="#8c8c8c" stroke-width="1.600"/><path d="M117,33.500h4.500l-2.250,2.800z" fill="#8a8a8a"/><path d="M133,41q1,-6 8,-6.500M137,31.500l4.500,3 -4,3.500" fill="none" stroke="#9a9a9a" stroke-width="1.600"/><path d="M149,33.500h4.500l-2.250,2.800z" fill="#9a9a9a"/><path d="M170.500,37l6.500,-5.500 6.500,5.500v5.500h-13z" fill="#8c8c8c"/><rect x="175" y="38.500" width="4" height="2.500" fill="#c8c8c8"/><path d="M1409,37h13M1415.500,30.500v13" stroke="#5a5a5a" stroke-width="1.600"/><circle cx="1443" cy="36" r="6" fill="none" stroke="#3c3c3c" stroke-width="2"/><path d="M1440,33.500l4,-0.500 -1,4z" fill="#3c3c3c"/><path d="M1446,38.500l-4,0.500 1,-3.500z" fill="#3c3c3c"/><circle cx="1470" cy="36" r="6.500" fill="#8a8a8a"/><circle cx="1470" cy="36" r="4.500" fill="#5a5a5a"/><path d="M1470,33v3.500h3" stroke="#d8d8d8" stroke-width="1.200" fill="none"/><path d="M1497,30c-4,0 -4.500,4 -4.500,7l-1.500,3h12l-1.500,-3c0,-3 -0.500,-7 -4.500,-7z" fill="#4a4a4a"/><circle cx="1497" cy="41.500" r="1.500" fill="#4a4a4a"/><circle cx="1524" cy="36" r="6.500" fill="#3c3c3c"/><text x="1524" y="39.800" font-family="Liberation Sans,sans-serif" font-weight="bold" font-size="10" text-anchor="middle" fill="#d8d8d8">?</text><circle cx="1556" cy="36" r="9.500" fill="#b4bcd4"/><circle cx="1556" cy="33" r="4" fill="#4a5a84"/><path d="M1548.500,42.500q7.500,-9 15,0q-7.500,6 -15,0z" fill="#4a5a84"/><path d="M726,33l6,-2.500 7,2.500v7l-7,3 -6,-3z" fill="#5a5a5a"/><path d="M726,33l6,2.500 7,-2.500M732,35.500v7.500" stroke="#9a9a9a" stroke-width="0.8" fill="none"/><path d="M726,33l6,-2.500 7,2.500 -7,2.500z" fill="#8a8a8a"/><path d="M1388.500,33.500l7,7M1395.500,33.500l-7,7" stroke="#4a4a4a" stroke-width="1.200"/></svg>
<div style="position:absolute;left:743px;top:31px;font:11px 'Liberation Sans','Noto Sans CJK JP',sans-serif;color:#3c3c3c;white-space:nowrap;letter-spacing:-0.15px">Intro to 2D Machining 1 v4</div>
<div style="position:absolute;left:2px;top:49px;width:1574px;height:66px;background:#f0f0f0"></div>
<div style="position:absolute;left:2px;top:114px;width:1574px;height:2px;background:linear-gradient(#f4f4f4,#e6e6e6)"></div>
<div style="position:absolute;left:12px;top:58px;width:88px;height:48px;border:1px solid #e2e2e2;border-radius:4px;background:#f3f3f3;box-sizing:border-box"></div>
<div style="position:absolute;left:12px;top:76px;width:88px;text-align:center;font:bold 9px 'Liberation Sans','Noto Sans CJK JP',sans-serif;color:#3a3a3a;white-space:nowrap">製造 <span style="font-size:6px;position:relative;top:-1px">▼</span></div>
<div style="position:absolute;left:124px;top:52px;font:bold 8.5px 'Liberation Sans','Noto Sans CJK JP',sans-serif;color:#1a8ad0;white-space:nowrap;letter-spacing:-0.3px;">ミル</div>
<div style="position:absolute;left:176px;top:52px;font:bold 8.5px 'Liberation Sans','Noto Sans CJK JP',sans-serif;color:#3c3c3c;white-space:nowrap;letter-spacing:-0.3px;">旋盤</div>
<div style="position:absolute;left:232px;top:52px;font:bold 8.5px 'Liberation Sans','Noto Sans CJK JP',sans-serif;color:#3c3c3c;white-space:nowrap;letter-spacing:-0.3px;">積層</div>
<div style="position:absolute;left:288px;top:52px;font:bold 8.5px 'Liberation Sans','Noto Sans CJK JP',sans-serif;color:#3c3c3c;white-space:nowrap;letter-spacing:-0.3px;">検査</div>
<div style="position:absolute;left:343px;top:52px;font:bold 8.5px 'Liberation Sans','Noto Sans CJK JP',sans-serif;color:#3c3c3c;white-space:nowrap;letter-spacing:-0.3px;">製法</div>
<div style="position:absolute;left:399px;top:52px;font:bold 8.5px 'Liberation Sans','Noto Sans CJK JP',sans-serif;color:#3c3c3c;white-space:nowrap;letter-spacing:-0.3px;transform:scaleX(0.78);transform-origin:0 0;">ユーティリティ</div>
<div style="position:absolute;left:115px;top:66.300px;width:34.500px;height:3.200px;background:#1a8ccc"></div>
<div style="position:absolute;left:184px;top:72px;width:1px;height:40px;background:#e0e0e0"></div>
<div style="position:absolute;left:298px;top:72px;width:1px;height:40px;background:#e0e0e0"></div>
<div style="position:absolute;left:519px;top:72px;width:1px;height:40px;background:#e0e0e0"></div>
<div style="position:absolute;left:598.5px;top:72px;width:1px;height:40px;background:#e0e0e0"></div>
<div style="position:absolute;left:655px;top:72px;width:1px;height:40px;background:#e0e0e0"></div>
<div style="position:absolute;left:770px;top:72px;width:1px;height:40px;background:#e0e0e0"></div>
<div style="position:absolute;left:919px;top:72px;width:1px;height:40px;background:#e0e0e0"></div>
<div style="position:absolute;left:1070px;top:72px;width:1px;height:40px;background:#e0e0e0"></div>
<div style="position:absolute;left:1117.5px;top:72px;width:1px;height:40px;background:#e0e0e0"></div>
<svg style="position:absolute;left:112.5px;top:70px" width="29" height="29" viewBox="0 0 32 32"><path d="M3,27L3,8L12,8L14,5L22,5L22,12L29,12L23,27Z" fill="#f4f4f4" stroke="#8a8a8a" stroke-width="1.2"/><path d="M3,27L9,13L30,13" fill="none" stroke="#8a8a8a" stroke-width="1.2"/><path d="M12,18l10,0M11,21l9,0" stroke="#c8d8e8" stroke-width="1"/></svg>
<svg style="position:absolute;left:147.5px;top:70px" width="29" height="29" viewBox="0 0 32 32"><rect x="5" y="3" width="22" height="26" fill="#fff" stroke="#8a8a8a" stroke-width="1.2"/><text x="16" y="14" font-family="Liberation Sans,sans-serif" font-weight="bold" font-size="10" text-anchor="middle" fill="#2f8fd8">G</text><path d="M10,19l13,0M10,24l13,0" stroke="#6a6a6a" stroke-width="1.2"/><circle cx="9.5" cy="19" r="1.2" fill="#6a6a6a"/><circle cx="9.5" cy="24" r="1.2" fill="#6a6a6a"/></svg>
<svg style="position:absolute;left:191.5px;top:70px" width="29" height="29" viewBox="0 0 32 32"><g transform="translate(1.5,4)"><path d="M5.0,14.5L20.0,4.5" stroke="#6a6a6a" stroke-width="6.6" stroke-linecap="round"/><path d="M8.6,18.9L23.6,8.9" stroke="#6a6a6a" stroke-width="6.6" stroke-linecap="round"/><path d="M12.2,23.3L27.2,13.3" stroke="#6a6a6a" stroke-width="6.6" stroke-linecap="round"/><path d="M5.0,14.5L20.0,4.5" stroke="#2f8fd8" stroke-width="5" stroke-linecap="round"/><path d="M8.6,18.9L23.6,8.9" stroke="#2f8fd8" stroke-width="5" stroke-linecap="round"/><path d="M12.2,23.3L27.2,13.3" stroke="#2f8fd8" stroke-width="5" stroke-linecap="round"/><circle cx="5.0" cy="14.5" r="1.6" fill="#fff"/><circle cx="20.0" cy="4.5" r="1.6" fill="#fff"/><circle cx="8.6" cy="18.9" r="1.6" fill="#fff"/><circle cx="23.6" cy="8.9" r="1.6" fill="#fff"/><circle cx="12.2" cy="23.3" r="1.6" fill="#fff"/><circle cx="27.2" cy="13.3" r="1.6" fill="#fff"/></g></svg>
<svg style="position:absolute;left:227.0px;top:70px" width="29" height="29" viewBox="0 0 32 32"><path d="M16,3L29,11L29,20L16,29L3,20L3,11Z" fill="#f6f6f6" stroke="#8a8a8a" stroke-width="1.2"/><path d="M16,12L26,18.5L16,25.5L6,18.5Z" fill="#2f8fd8"/><path d="M16,9L27,16L16,13.5L5,16Z" fill="#8cc4ee" opacity="0.8"/><path d="M12,18.5q4,-3 8,0" stroke="#1c6fb8" fill="none" stroke-width="1"/></svg>
<svg style="position:absolute;left:262.0px;top:70px" width="29" height="29" viewBox="0 0 32 32"><path d="M16,10L30,19L16,28L2,19Z" fill="#2f8fd8"/><path d="M16,5L28,13L16,21L4,13Z" fill="#fff" stroke="#8cc4ee" stroke-width="1"/></svg>
<svg style="position:absolute;left:306.5px;top:70px" width="29" height="29" viewBox="0 0 32 32"><path d="M4,9L8,4L27,4L29,6L29,24L24,29L4,29Z" fill="#e4e4e4" stroke="#6a6a6a" stroke-width="1.3" stroke-linejoin="round"/><path d="M24,29L24,9L29,6" fill="none" stroke="#8a8a8a" stroke-width="0.9"/><path d="M8,11h14v14h-14z" fill="#8cc4ee"/><path d="M8,13q7,-3 15,-1M7,18q8,-4 16,-1M8,23q7,-3 15,-1" stroke="#1c6fb8" stroke-width="2.6" fill="none"/></svg>
<svg style="position:absolute;left:343.5px;top:70px" width="29" height="29" viewBox="0 0 32 32"><path d="M2,20L14,12L26,19L13,28Z" fill="#d8d8d8" stroke="#b8c4cc" stroke-width="1"/><path d="M6,20L14,15L21,19L13,24.5Z" fill="#8cc4ee"/><circle cx="24" cy="9" r="7" fill="#1e88dc" stroke="#fff" stroke-width="1.2"/><path d="M21.6,5.4l0,7.2 1.8,-1.6 1.3,2.7 1.3,-0.6 -1.3,-2.6 2.3,-0.2z" fill="#fff"/></svg>
<svg style="position:absolute;left:378.5px;top:70px" width="29" height="29" viewBox="0 0 32 32"><path d="M8,8L28,5L26,11L6,14Z" fill="#2f8fd8"/><path d="M6,14L26,11L26,15L6,18Z" fill="#8a8a8a"/><path d="M4,19L25,16L23,23L2,26Z" fill="#8cc4ee"/><path d="M2,26L23,23L23,27L2,30Z" fill="#8a8a8a"/></svg>
<svg style="position:absolute;left:412.5px;top:70px" width="29" height="29" viewBox="0 0 32 32"><path d="M4,10L22,4L29,5L29,21L22,29L4,29Z" fill="#d8d8d8" stroke="#6a6a6a" stroke-width="1.2" stroke-linejoin="round"/><path d="M5,10.500L21.500,5.500L21.500,28L5,28Z" fill="#2f8fd8"/><path d="M8,26C8,10 12,8 12,20S16,26 16,11S20,6 20,22" stroke="#d4e8f8" stroke-width="1.5" fill="none"/></svg>
<svg style="position:absolute;left:448.5px;top:70px" width="29" height="29" viewBox="0 0 32 32"><ellipse cx="16" cy="21" rx="14" ry="6" fill="#d8d8d8" stroke="#b0b8c0" stroke-width="0.8"/><path d="M3,20C3,4 29,4 29,20C26,25 6,25 3,20Z" fill="#2f8fd8"/><ellipse cx="16" cy="13" rx="6" ry="2.6" fill="none" stroke="#8cc4ee" stroke-width="1.2"/><ellipse cx="16" cy="13" rx="2" ry="0.9" fill="#8cc4ee"/></svg>
<svg style="position:absolute;left:483.0px;top:70px" width="29" height="29" viewBox="0 0 32 32"><path d="M1,25L20,21L31,25L14,30Z" fill="#d8d8d8" stroke="#b0b8c0" stroke-width="0.8"/><path d="M5,25C7,18 10,17 11,12C12,7 13,5 15,4C17,5 18,9 20,13C22,18 26,21 28,24C20,29 10,28 5,25Z" fill="#2f8fd8"/><path d="M11,11q4,2 8,0M9,16q7,3 13,0M7,21q9,4 18,0" stroke="#8cc4ee" stroke-width="1.3" fill="none"/></svg>
<svg style="position:absolute;left:527.5px;top:70px" width="29" height="29" viewBox="0 0 32 32"><path d="M2,22L14,14L30,17L18,26Z" fill="#f2f2f2" stroke="#8a8a8a" stroke-width="1.1"/><rect x="12" y="3" width="8" height="25" rx="3" fill="#d8d8d8" stroke="#8a8a8a" stroke-width="1.1"/><path d="M12,9l8,4M12,15l8,4" stroke="#8a8a8a" stroke-width="1"/><path d="M12.5,19h7v6h-7z" fill="#8cc4ee" opacity="0.8"/></svg>
<svg style="position:absolute;left:563.0px;top:70px" width="29" height="29" viewBox="0 0 32 32"><path d="M4,22L14,16L26,19L16,26Z" fill="#ececec" stroke="#c4c4c4" stroke-width="1"/><rect x="13" y="14" width="6" height="14" rx="2.5" fill="#d8d8d8" stroke="#b0b0b0" stroke-width="0.9"/><path d="M5,6l0,5M2.5,8.5l5,0" stroke="#f08a8a" stroke-width="1.2"/><circle cx="24" cy="9" r="7" fill="#1e88dc" stroke="#fff" stroke-width="1.2"/><path d="M21.6,5.4l0,7.2 1.8,-1.6 1.3,2.7 1.3,-0.6 -1.3,-2.6 2.3,-0.2z" fill="#fff"/></svg>
<svg style="position:absolute;left:611.5px;top:70px" width="29" height="29" viewBox="0 0 32 32"><path d="M3,14L12,10L12,22L3,26Z" fill="#2f8fd8"/><path d="M12,17L20,22L30,15L30,22L20,30L12,25Z" fill="#2f8fd8"/><path d="M12,17L20,22L30,15L22,10Z" fill="#d8d8d8"/><rect x="12" y="5" width="9" height="9" rx="2" transform="rotate(25 16 9)" fill="#d8d8d8" stroke="#8a8a8a" stroke-width="1"/><rect x="10" y="15" width="6" height="9" rx="2" transform="rotate(25 13 19)" fill="#8a8a8a"/></svg>
<svg style="position:absolute;left:664.5px;top:70px" width="29" height="29" viewBox="0 0 32 32"><path d="M4,8l14,10M4,13l9,6" stroke="#c8d0d8" stroke-width="1"/><circle cx="11" cy="25" r="3" fill="none" stroke="#8a8a8a" stroke-width="1.6"/><circle cx="20" cy="26" r="3" fill="none" stroke="#8a8a8a" stroke-width="1.6"/><path d="M12,22L21,10M19,23L12,11" stroke="#8a8a8a" stroke-width="1.8"/><circle cx="24" cy="9" r="7" fill="#1e88dc" stroke="#fff" stroke-width="1.2"/><path d="M21.6,5.4l0,7.2 1.8,-1.6 1.3,2.7 1.3,-0.6 -1.3,-2.6 2.3,-0.2z" fill="#fff"/></svg>
<svg style="position:absolute;left:699.0px;top:70px" width="29" height="29" viewBox="0 0 32 32"><path d="M3,12l14,9M3,17l12,8M7,10l8,5" stroke="#a8c8e8" stroke-width="1.2"/><path d="M18,19l9,9M27,19l-9,9" stroke="#f07070" stroke-width="2.6"/><circle cx="24" cy="9" r="7" fill="#1e88dc" stroke="#fff" stroke-width="1.2"/><path d="M21.6,5.4l0,7.2 1.8,-1.6 1.3,2.7 1.3,-0.6 -1.3,-2.6 2.3,-0.2z" fill="#fff"/></svg>
<svg style="position:absolute;left:734.5px;top:70px" width="29" height="29" viewBox="0 0 32 32"><path d="M5,6h8v8l-2,3v5h-4v-5l-2,-3z" fill="#d8d8d8" stroke="#c0c0c0" stroke-width="0.8"/><path d="M8,26l14,0M8,26l3,-2M8,26l3,2M22,26l-3,-2M22,26l-3,2" stroke="#8cc4ee" stroke-width="1.1" fill="none"/><rect x="20" y="16" width="5" height="8" fill="#d8d8d8"/><circle cx="24" cy="9" r="7" fill="#1e88dc" stroke="#fff" stroke-width="1.2"/><path d="M21.6,5.4l0,7.2 1.8,-1.6 1.3,2.7 1.3,-0.6 -1.3,-2.6 2.3,-0.2z" fill="#fff"/></svg>
<svg style="position:absolute;left:778.0px;top:70px" width="29" height="29" viewBox="0 0 32 32"><path d="M2,17L16,7L30,17L16,28Z" fill="#fafafa" stroke="#8a8a8a" stroke-width="1.3"/><path d="M2,17L16,28L30,17L30,20L16,31L2,20Z" fill="#d8d8d8" stroke="#8a8a8a" stroke-width="0.8"/><path d="M11,16L17,11.5L23,16L18,20L14,20" stroke="#2f8fd8" stroke-width="2.4" fill="none" stroke-linejoin="round"/></svg>
<svg style="position:absolute;left:813.5px;top:70px" width="29" height="29" viewBox="0 0 32 32"><path d="M3,18L16,8L29,18L16,29Z" fill="#f4f9fd" stroke="#2f8fd8" stroke-width="1.6"/><rect x="16" y="2" width="6" height="6" rx="1" fill="#d8d8d8" stroke="#8a8a8a" stroke-width="0.9"/><rect x="17" y="8" width="4" height="13" fill="#d8d8d8" stroke="#8a8a8a" stroke-width="0.9"/><path d="M17,11l4,2M17,14l4,2M17,17l4,2" stroke="#8a8a8a" stroke-width="0.8"/><circle cx="14" cy="19" r="2.4" fill="none" stroke="#2f8fd8" stroke-width="1.1"/></svg>
<svg style="position:absolute;left:848.5px;top:70px" width="29" height="29" viewBox="0 0 32 32"><rect x="5" y="3" width="22" height="26" fill="#fff" stroke="#8a8a8a" stroke-width="1.2"/><text x="16" y="15" font-family="Liberation Sans,sans-serif" font-weight="bold" font-size="9.5" text-anchor="middle" fill="#2f8fd8">G1</text><text x="16" y="25" font-family="Liberation Sans,sans-serif" font-weight="bold" font-size="9.5" text-anchor="middle" fill="#2f8fd8">G2</text></svg>
<svg style="position:absolute;left:884.5px;top:70px" width="29" height="29" viewBox="0 0 32 32"><rect x="6" y="3" width="20" height="24" fill="#fff" stroke="#8a8a8a" stroke-width="1.2"/><rect x="10" y="7" width="12" height="4" fill="none" stroke="#8a8a8a" stroke-width="0.9"/><path d="M10,15h12M10,19h12M10,23h12" stroke="#8a8a8a" stroke-width="1.1"/></svg>
<svg style="position:absolute;left:928.0px;top:70px" width="29" height="29" viewBox="0 0 32 32"><path d="M3,4h9v5h-3v15h-3v-15h-3z" fill="#d8d8d8" stroke="#8a8a8a" stroke-width="0.8"/><circle cx="7.5" cy="24" r="1.4" fill="#e04040"/><path d="M10,26l2,-9h8l1,9z" fill="#f0a020"/><path d="M14,8l6,3v12l-6,-3z" fill="#6a6a6a"/><path d="M20,11h8v6l-2,2v9l-4,2v-11l-2,-2z" fill="#d8d8d8" stroke="#8a8a8a" stroke-width="0.8"/><path d="M22,20l4,2M22,23l4,2" stroke="#8a8a8a" stroke-width="0.8"/></svg>
<svg style="position:absolute;left:963.5px;top:70px" width="29" height="29" viewBox="0 0 32 32"><rect x="2" y="7" width="28" height="19" rx="4" fill="#d8d8d8" stroke="#8a8a8a" stroke-width="1"/><rect x="2" y="23" width="28" height="5" fill="#1c4f90"/><rect x="9" y="10" width="12" height="12" fill="#8cc4ee" stroke="#2f8fd8" stroke-width="1"/><rect x="12" y="13" width="6" height="6" fill="#e8f2fb"/><rect x="23" y="12" width="4" height="7" fill="#c0c8d0"/></svg>
<svg style="position:absolute;left:999.0px;top:70px" width="29" height="29" viewBox="0 0 32 32"><path d="M4,3h10l5,5v17h-15z" fill="#f4f4f4" stroke="#8a8a8a" stroke-width="0.9"/><path d="M7,5h10l5,5v17h-15z" fill="#f4f4f4" stroke="#8a8a8a" stroke-width="0.9"/><path d="M11,8h10l6,6v16h-16z" fill="#fff" stroke="#8a8a8a" stroke-width="1.1"/><path d="M21,8v6h6" fill="none" stroke="#8a8a8a" stroke-width="1"/><text x="19" y="27" font-family="Liberation Sans,sans-serif" font-weight="bold" font-size="11" text-anchor="middle" fill="#2f8fd8">G</text></svg>
<svg style="position:absolute;left:1034.5px;top:70px" width="29" height="29" viewBox="0 0 32 32"><path d="M4,3h10l5,5v17h-15z" fill="#f4f4f4" stroke="#8a8a8a" stroke-width="0.9"/><path d="M7,5h10l5,5v17h-15z" fill="#f4f4f4" stroke="#8a8a8a" stroke-width="0.9"/><path d="M11,8h10l6,6v16h-16z" fill="#fff" stroke="#8a8a8a" stroke-width="1.1"/><path d="M21,8v6h6" fill="none" stroke="#8a8a8a" stroke-width="1"/><path d="M23,19q-7,-3 -8,1t8,4q2,3 -7,2" stroke="#2f8fd8" stroke-width="2" fill="none"/></svg>
<svg style="position:absolute;left:1079.5px;top:70px" width="29" height="29" viewBox="0 0 32 32"><path d="M3,9v8M29,9v8M3,13h26M3,13l3,-2M3,13l3,2M29,13l-3,-2M29,13l-3,2" stroke="#6a6a6a" stroke-width="1" fill="none"/><rect x="3" y="19" width="26" height="6" fill="#f0a418"/><path d="M6,19v3M9,19v2M12,19v3M15,19v2M18,19v3M21,19v2M24,19v3M27,19v2" stroke="#a06808" stroke-width="0.7"/></svg>
<svg style="position:absolute;left:1126.5px;top:68px" width="32" height="32" viewBox="0 0 32 32"><rect x="0.5" y="0.5" width="31" height="31" fill="#0c8ce0"/><rect x="4" y="6" width="20" height="17" fill="none" stroke="#5ab4f0" stroke-width="1" stroke-dasharray="1.5,2"/><path d="M19,13l0,15 3.6,-3.2 2.6,5.6 2.6,-1.2 -2.6,-5.4 4.6,-0.4z" fill="#fff" stroke="#0a5a9a" stroke-width="0.5"/></svg>
<div style="position:absolute;left:130px;top:102px;font:bold 8.500px 'Liberation Sans','Noto Sans CJK JP',sans-serif;color:#3c3c3c;white-space:nowrap;letter-spacing:-0.3px;">設定 <span style="font-size:5.500px;position:relative;top:-1px">▼</span></div>
<div style="position:absolute;left:231px;top:103.5px;font:bold 8.500px 'Liberation Sans','Noto Sans CJK JP',sans-serif;color:#3c3c3c;white-space:nowrap;letter-spacing:-0.3px;">2D <span style="font-size:5.500px;position:relative;top:-1px">▼</span></div>
<div style="position:absolute;left:399px;top:103.5px;font:bold 8.500px 'Liberation Sans','Noto Sans CJK JP',sans-serif;color:#3c3c3c;white-space:nowrap;letter-spacing:-0.3px;">3D <span style="font-size:5.500px;position:relative;top:-1px">▼</span></div>
<div style="position:absolute;left:545px;top:102px;font:bold 8.500px 'Liberation Sans','Noto Sans CJK JP',sans-serif;color:#3c3c3c;white-space:nowrap;letter-spacing:-0.3px;transform:scaleX(0.86);transform-origin:0 0;">ドリル <span style="font-size:5.500px;position:relative;top:-1px">▼</span></div>
<div style="position:absolute;left:609px;top:102px;font:bold 8.500px 'Liberation Sans','Noto Sans CJK JP',sans-serif;color:#3c3c3c;white-space:nowrap;letter-spacing:-0.3px;">複合軸 <span style="font-size:5.500px;position:relative;top:-1px">▼</span></div>
<div style="position:absolute;left:697px;top:102px;font:bold 8.500px 'Liberation Sans','Noto Sans CJK JP',sans-serif;color:#3c3c3c;white-space:nowrap;letter-spacing:-0.3px;">修正 <span style="font-size:5.500px;position:relative;top:-1px">▼</span></div>
<div style="position:absolute;left:823px;top:102px;font:bold 8.500px 'Liberation Sans','Noto Sans CJK JP',sans-serif;color:#3c3c3c;white-space:nowrap;letter-spacing:-0.3px;transform:scaleX(0.86);transform-origin:0 0;">アクション <span style="font-size:5.500px;position:relative;top:-1px">▼</span></div>
<div style="position:absolute;left:980px;top:102px;font:bold 8.500px 'Liberation Sans','Noto Sans CJK JP',sans-serif;color:#3c3c3c;white-space:nowrap;letter-spacing:-0.3px;">管理 <span style="font-size:5.500px;position:relative;top:-1px">▼</span></div>
<div style="position:absolute;left:1080px;top:102px;font:bold 8.500px 'Liberation Sans','Noto Sans CJK JP',sans-serif;color:#3c3c3c;white-space:nowrap;letter-spacing:-0.3px;">検査 <span style="font-size:5.500px;position:relative;top:-1px">▼</span></div>
<div style="position:absolute;left:1128px;top:102px;font:bold 8.500px 'Liberation Sans','Noto Sans CJK JP',sans-serif;color:#3c3c3c;white-space:nowrap;letter-spacing:-0.3px;">選択 <span style="font-size:5.500px;position:relative;top:-1px">▼</span></div>
<div style="position:absolute;left:4px;top:120px;width:277px;height:19.500px;background:#f1f1f1;border:1px solid #e0e0e0;box-sizing:border-box"></div>
<div style="position:absolute;left:25px;top:123.500px;font:8.500px 'Liberation Sans','Noto Sans CJK JP',sans-serif;color:#3c3c3c;letter-spacing:-0.3px;transform:scaleX(0.8);transform-origin:0 0;white-space:nowrap">ブラウザ</div>
<svg style="position:absolute;left:8px;top:124px" width="12" height="10" viewBox="0 0 12 10"><path d="M5,2v6l-4,-3zM10,2v6l-4,-3z" fill="#3c3c3c"/></svg>
<svg style="position:absolute;left:262px;top:123px" width="22" height="12" viewBox="0 0 22 12"><circle cx="6" cy="6" r="4" fill="#2c2c2c"/><path d="M4,6h4" stroke="#fff" stroke-width="1.200"/><path d="M16.500,1v10M18.500,1v10" stroke="#b8b8b8" stroke-width="1"/></svg>
<div style="position:absolute;left:4px;top:865px;width:277px;height:21px;background:#f1f1f1;border:1px solid #e0e0e0;box-sizing:border-box"></div>
<div style="position:absolute;left:24px;top:869px;font:8.500px 'Liberation Sans','Noto Sans CJK JP',sans-serif;color:#3c3c3c;letter-spacing:-0.3px;transform:scaleX(0.8);transform-origin:0 0;white-space:nowrap">コメント</div>
<svg style="position:absolute;left:262px;top:869px" width="22" height="12" viewBox="0 0 22 12"><circle cx="6" cy="6" r="4" fill="#2c2c2c"/><path d="M4,6h4M6,4v4" stroke="#fff" stroke-width="1.100"/><path d="M16.500,1v10M18.500,1v10" stroke="#b8b8b8" stroke-width="1"/></svg>
<div style="position:absolute;left:0;top:886px;width:1576px;height:2px;background:#9a9a9a"></div>
<div style="position:absolute;left:1412px;top:869px;font:bold 9px 'Liberation Sans','Noto Sans CJK JP',sans-serif;color:#2c2c2c;white-space:nowrap;letter-spacing:-0.2px">2D 面取り1 | 加工時間: <span style="font-weight:normal">0:00:43</span></div>
<svg style="position:absolute;left:1551px;top:868px" width="14" height="14" viewBox="0 0 14 14"><path d="M7,0.500a6.500,6.500 0 1 0 6.500,6.500v6.500h-6.500" fill="#1c1c1c"/><circle cx="7" cy="7" r="6.500" fill="#1c1c1c"/><path d="M4.500,9.500l2.500,-5.500 2.500,5.500z" fill="none" stroke="#fff" stroke-width="1.100"/></svg>
<div style="position:absolute;left:14px;top:144px;width:176px;height:16px;background:rgba(244,244,244,0.9)"></div>
<div style="position:absolute;left:78px;top:144px;width:112px;height:16px;background:rgba(244,244,244,0.92)"></div>
<div style="position:absolute;left:72px;top:163.5px;width:48px;height:16px;background:rgba(244,244,244,0.92)"></div>
<div style="position:absolute;left:72px;top:183px;width:80px;height:16px;background:rgba(244,244,244,0.92)"></div>
<div style="position:absolute;left:92px;top:203px;width:32px;height:16px;background:rgba(244,244,244,0.92)"></div>
<div style="position:absolute;left:92px;top:223px;width:28px;height:16px;background:rgba(244,244,244,0.92)"></div>
<div style="position:absolute;left:106px;top:244px;width:45px;height:14px;background:#8c8c8c"></div>
<div style="position:absolute;left:122px;top:262px;width:42px;height:16px;background:rgba(244,244,244,0.92)"></div>
<div style="position:absolute;left:122px;top:282px;width:82px;height:16px;background:rgba(244,244,244,0.92)"></div>
<div style="position:absolute;left:122px;top:301.5px;width:82px;height:16px;background:rgba(244,244,244,0.92)"></div>
<div style="position:absolute;left:122px;top:321px;width:64px;height:16px;background:rgba(244,244,244,0.92)"></div>
<div style="position:absolute;left:122px;top:341px;width:64px;height:16px;background:rgba(244,244,244,0.92)"></div>
<div style="position:absolute;left:99px;top:360px;width:100px;height:17.500px;background:#0c8ad8"></div><svg style="position:absolute;left:0;top:0" width="300" height="400" viewBox="0 0 300 400"><path d="M26,147.5v9h-9z" fill="#3a3a3a"/><path d="M37,152q6,-6.500 12,0q-6,6.500 -12,0z" fill="none" stroke="#8a8a8a" stroke-width="1.200"/><circle cx="43" cy="152" r="2.300" fill="#8a8a8a"/><path d="M58.5,158.5v-9.500l3.500,-3h3v5h4.500v7.500z" fill="#fff" stroke="#4a4a4a" stroke-width="1.200" stroke-linejoin="round"/><rect x="61.5" y="153" width="3" height="3" fill="none" stroke="#4a4a4a" stroke-width="0.900"/><path d="M53.500,177.5v-12h6l3.500,3.500v8.500z" fill="#fff" stroke="#5a5a5a" stroke-width="1.100"/><rect x="53" y="175.0" width="10.500" height="3" fill="#e0a020"/><path d="M34.5,185.5l7.500,5.500 -7.500,5.500z" fill="#fff" stroke="#3a3a3a" stroke-width="1.300" stroke-linejoin="round"/><path d="M52,196.5v-10.500h5l1.500,2h6.500v8.500z" fill="#9a9a9a"/><path d="M34.5,205.5l7.500,5.500 -7.500,5.500z" fill="#fff" stroke="#3a3a3a" stroke-width="1.300" stroke-linejoin="round"/><path d="M52,211q6,-6.500 12,0q-6,6.500 -12,0z" fill="none" stroke="#8a8a8a" stroke-width="1.200"/><circle cx="58" cy="211" r="2.300" fill="#8a8a8a"/><path d="M72.5,217.5v-9.500l3.500,-3h3v5h4.500v7.500z" fill="#fff" stroke="#4a4a4a" stroke-width="1.200" stroke-linejoin="round"/><rect x="75.5" y="212" width="3" height="3" fill="none" stroke="#4a4a4a" stroke-width="0.900"/><path d="M42,226.5v9h-9z" fill="#3a3a3a"/><path d="M52,231q6,-6.500 12,0q-6,6.500 -12,0z" fill="none" stroke="#8a8a8a" stroke-width="1.200"/><circle cx="58" cy="231" r="2.300" fill="#8a8a8a"/><path d="M74,236v-10h4l1.500,2h5v2.500" fill="none" stroke="#5a5a5a" stroke-width="1.100"/><path d="M74,236l3,-6h10.500l-3,6z" fill="#fff" stroke="#5a5a5a" stroke-width="1.100"/><path d="M72,238h50" stroke="#5a5a5a" stroke-width="1.600" stroke-dasharray="1.500,2.500"/><path d="M57,246.5v9h-9z" fill="#3a3a3a"/><path d="M67,251q6,-6.500 12,0q-6,6.500 -12,0z" fill="none" stroke="#8a8a8a" stroke-width="1.200"/><circle cx="73" cy="251" r="2.300" fill="#8a8a8a"/><path d="M89,256v-10h4l1.500,2h5v2.500" fill="none" stroke="#5a5a5a" stroke-width="1.100"/><path d="M89,256l3,-6h10.500l-3,6z" fill="#fff" stroke="#5a5a5a" stroke-width="1.100"/><circle cx="160" cy="251" r="4.800" fill="#fff" stroke="#3a3a3a" stroke-width="1.100"/><circle cx="160" cy="251" r="1.800" fill="#3a3a3a"/><path d="M63.5,264.5l7.500,5.500 -7.500,5.500z" fill="#fff" stroke="#3a3a3a" stroke-width="1.300" stroke-linejoin="round"/><path d="M82,270q6,-6.500 12,0q-6,6.500 -12,0z" fill="none" stroke="#c4c4c4" stroke-width="1.200"/><circle cx="88" cy="270" r="2.300" fill="#c4c4c4"/><path d="M63.5,284.5l7.500,5.500 -7.500,5.500z" fill="#fff" stroke="#3a3a3a" stroke-width="1.300" stroke-linejoin="round"/><path d="M82,290q6,-6.500 12,0q-6,6.500 -12,0z" fill="none" stroke="#c4c4c4" stroke-width="1.200"/><circle cx="88" cy="290" r="2.300" fill="#c4c4c4"/><path d="M63.5,304.0l7.500,5.500 -7.500,5.500z" fill="#fff" stroke="#3a3a3a" stroke-width="1.300" stroke-linejoin="round"/><path d="M82,309.5q6,-6.500 12,0q-6,6.500 -12,0z" fill="none" stroke="#c4c4c4" stroke-width="1.200"/><circle cx="88" cy="309.5" r="2.300" fill="#c4c4c4"/><path d="M63.5,323.5l7.500,5.500 -7.500,5.500z" fill="#fff" stroke="#3a3a3a" stroke-width="1.300" stroke-linejoin="round"/><path d="M82,329q6,-6.500 12,0q-6,6.500 -12,0z" fill="none" stroke="#c4c4c4" stroke-width="1.200"/><circle cx="88" cy="329" r="2.300" fill="#c4c4c4"/><path d="M63.5,343.5l7.500,5.500 -7.500,5.500z" fill="#fff" stroke="#3a3a3a" stroke-width="1.300" stroke-linejoin="round"/><path d="M82,349q6,-6.500 12,0q-6,6.500 -12,0z" fill="none" stroke="#c4c4c4" stroke-width="1.200"/><circle cx="88" cy="349" r="2.300" fill="#c4c4c4"/><path d="M63.5,363.0l7.500,5.500 -7.500,5.500z" fill="#fff" stroke="#3a3a3a" stroke-width="1.300" stroke-linejoin="round"/><path d="M82,368.5q6,-6.500 12,0q-6,6.500 -12,0z" fill="none" stroke="#c4c4c4" stroke-width="1.200"/><circle cx="88" cy="368.5" r="2.300" fill="#c4c4c4"/></svg><svg style="position:absolute;left:0;top:0" width="300" height="400" viewBox="0 0 300 400"><path d="M102,270l7,-5 6,3.500 -7,5.500z" fill="#2a78c0"/><path d="M102,270l6,4 7,-5.500v2l-7,5.500 -6,-4z" fill="#1c5a98"/><path d="M108,284.5l7,4.500v2l-7,5 -7,-5v-2z" fill="#f0f0f0" stroke="#8a8a8a" stroke-width="0.800"/><path d="M103,291q5,-5 10,0l-5,3.500z" fill="#2a78c0"/><path d="M108,304.0l7,4.500v2l-7,5 -7,-5v-2z" fill="#f0f0f0" stroke="#8a8a8a" stroke-width="0.800"/><path d="M103,310.5q5,-5 10,0l-5,3.500z" fill="#2a78c0"/><path d="M108,327l7,4 -7,4.500 -7,-4.500z" fill="#2a8ad8"/><path d="M108,323.5l6,4 -6,4 -6,-4z" fill="#fff" stroke="#8cc0e8" stroke-width="0.800"/><path d="M108,347l7,4 -7,4.500 -7,-4.500z" fill="#2a8ad8"/><path d="M108,343.5l6,4 -6,4 -6,-4z" fill="#fff" stroke="#8cc0e8" stroke-width="0.800"/><path d="M108,367.5l6,3.500 -6,4 -6,-4z" fill="#d8ecfa"/><path d="M108,363.0l4.500,3 -4.500,3 -4.500,-3z" fill="#fff"/><rect x="109" y="362.5" width="2.500" height="6" fill="#e8e8e8"/></svg><div style="position:absolute;left:82px;top:146.5px;font:9.1px 'Liberation Sans','Noto Sans CJK JP',sans-serif;color:#3a3a3a;white-space:nowrap;letter-spacing:-0.250px">Intro to 2D Machining 1 v4</div>
<div style="position:absolute;left:76px;top:166.0px;font:8.5px 'Liberation Sans','Noto Sans CJK JP',sans-serif;color:#3a3a3a;white-space:nowrap;letter-spacing:-0.250px">単位: mm</div>
<div style="position:absolute;left:76px;top:185.5px;font:8.5px 'Liberation Sans','Noto Sans CJK JP',sans-serif;color:#3a3a3a;white-space:nowrap;letter-spacing:-0.250px">名前の付いたビュー</div>
<div style="position:absolute;left:96px;top:205.5px;font:8.5px 'Liberation Sans','Noto Sans CJK JP',sans-serif;color:#3a3a3a;white-space:nowrap;letter-spacing:-0.250px">モデル</div>
<div style="position:absolute;left:96px;top:225.5px;font:8.5px 'Liberation Sans','Noto Sans CJK JP',sans-serif;color:#3a3a3a;white-space:nowrap;letter-spacing:-0.250px">設定</div>
<div style="position:absolute;left:112px;top:245.500px;font:bold 8.500px 'Liberation Sans','Noto Sans CJK JP',sans-serif;color:#fff;white-space:nowrap;letter-spacing:-0.200px">Setup1</div>
<div style="position:absolute;left:126px;top:264.5px;font:8.5px 'Liberation Sans','Noto Sans CJK JP',sans-serif;color:#3a3a3a;white-space:nowrap;letter-spacing:-0.250px">[T1] 面2</div>
<div style="position:absolute;left:126px;top:284.5px;font:8.5px 'Liberation Sans','Noto Sans CJK JP',sans-serif;color:#3a3a3a;white-space:nowrap;letter-spacing:-0.250px">[T2] 2D 負荷制御1</div>
<div style="position:absolute;left:126px;top:304.0px;font:8.5px 'Liberation Sans','Noto Sans CJK JP',sans-serif;color:#3a3a3a;white-space:nowrap;letter-spacing:-0.250px">[T5] 2D 負荷制御2</div>
<div style="position:absolute;left:126px;top:323.5px;font:8.5px 'Liberation Sans','Noto Sans CJK JP',sans-serif;color:#3a3a3a;white-space:nowrap;letter-spacing:-0.250px">[T3] 2D 輪郭1</div>
<div style="position:absolute;left:126px;top:343.5px;font:8.5px 'Liberation Sans','Noto Sans CJK JP',sans-serif;color:#3a3a3a;white-space:nowrap;letter-spacing:-0.250px">[T3] 2D 輪郭2</div>
<div style="position:absolute;left:126px;top:362.0px;font:bold 8.500px 'Liberation Sans','Noto Sans CJK JP',sans-serif;color:#fff;white-space:nowrap;letter-spacing:-0.250px">[T4] 2D 面取り1</div>
<div style="position:absolute;left:704px;top:865.500px;width:321px;height:21px;background:#f7f7f7"></div>
<svg style="position:absolute;left:0;top:0" width="1576" height="888" viewBox="0 0 1576 888"><path d="M711.500,869v12M706,875h11" stroke="#3a3a3a" stroke-width="1.300"/><ellipse cx="711.500" cy="876" rx="5.500" ry="2.500" fill="none" stroke="#3a3a3a" stroke-width="1"/><path d="M722.7,874h4.600l-2.300,2.800z" fill="#3a3a3a"/><rect x="733" y="870.500" width="13" height="9.500" rx="1" fill="#e4e4e4" stroke="#5a5a5a" stroke-width="1"/><rect x="736" y="873.500" width="7" height="4" fill="#9a9a9a"/><path d="M736,870v-2M743,870v-2" stroke="#5a5a5a" stroke-width="1.200"/><path d="M757,881c-3,-2 -3.500,-5 -3,-7l1.500,-0.500 1,2.500v-6l1.500,-0.500 0.800,4 0.300,-5h1.600l0.400,5 0.800,-4 1.500,0.500v8c0,2 -1,3 -2,3.500z" fill="#fff" stroke="#3a3a3a" stroke-width="0.900"/><circle cx="779" cy="874" r="4" fill="#f8f8f8" stroke="#3a3a3a" stroke-width="1.200"/><path d="M782,877l4,4" stroke="#3a3a3a" stroke-width="1.800"/><path d="M785,869v4M783,871h4" stroke="#3a3a3a" stroke-width="0.900"/><circle cx="802" cy="873.500" r="5" fill="#f8f8f8" stroke="#6a6a6a" stroke-width="1.200"/><path d="M805.500,877.500l4.500,4.500" stroke="#3a3a3a" stroke-width="2"/><path d="M813.7,874h4.600l-2.300,2.800z" fill="#3a3a3a"/><rect x="824" y="868.500" width="13" height="9.500" fill="#6a9ad0" stroke="#4a5a6a" stroke-width="1"/><path d="M828,881h5M830.500,878v3" stroke="#4a4a4a" stroke-width="1.300"/><path d="M840.2,874h4.600l-2.300,2.800z" fill="#3a3a3a"/><rect x="849.500" y="868.500" width="12" height="12" fill="#d8d8d8" stroke="#5a5a5a" stroke-width="1"/><path d="M853.500,868.500v12M857.500,868.500v12M849.500,872.500h12M849.500,876.500h12" stroke="#5a5a5a" stroke-width="0.800"/><path d="M865.2,874h4.600l-2.300,2.800z" fill="#3a3a3a"/><rect x="875.500" y="871.500" width="9" height="9" fill="#c8d8ec" stroke="#4a5a7a" stroke-width="1"/><path d="M878,871.500v-3h10v10h-3" fill="none" stroke="#4a5a7a" stroke-width="1"/><path d="M890.7,874h4.600l-2.300,2.800z" fill="#3a3a3a"/><rect x="901" y="869.500" width="12" height="10" fill="#4a6aa0"/><path d="M899,874.500h16" stroke="#2a3a5a" stroke-width="1.200"/><path d="M916.2,874h4.600l-2.300,2.800z" fill="#3a3a3a"/><path d="M926.500,873a5,5 0 0 1 9,-1.500M935.500,877a5,5 0 0 1 -9,1.500" fill="none" stroke="#2a6ab8" stroke-width="1.600"/><path d="M936.500,868.500v4h-4zM925.500,881.500v-4h4z" fill="#2a6ab8"/><path d="M941.2,874h4.600l-2.300,2.800z" fill="#3a3a3a"/><path d="M957.500,868.500l7.500,6 -7.500,6 -7.500,-6z" fill="#2a8ad8"/><path d="M957.500,868.500l7.500,6 -7.500,-2.500 -7.500,2.500z" fill="#8cc8f4"/><path d="M966.7,874h4.600l-2.300,2.800z" fill="#3a3a3a"/><rect x="975.500" y="869.500" width="14" height="9" fill="#a8c8e8" stroke="#4a5a6a" stroke-width="1"/><rect x="978" y="872" width="6" height="4" fill="#e8f0f8"/><path d="M992.2,874h4.600l-2.300,2.800z" fill="#3a3a3a"/><path d="M1003,868.500h9l-3,4.500v7.500h-3v-7.500z" fill="#b8b8b8" stroke="#8a8a8a" stroke-width="0.800"/><path d="M1017.2,874h4.600l-2.300,2.800z" fill="#3a3a3a"/></svg>
</div></body></html>
